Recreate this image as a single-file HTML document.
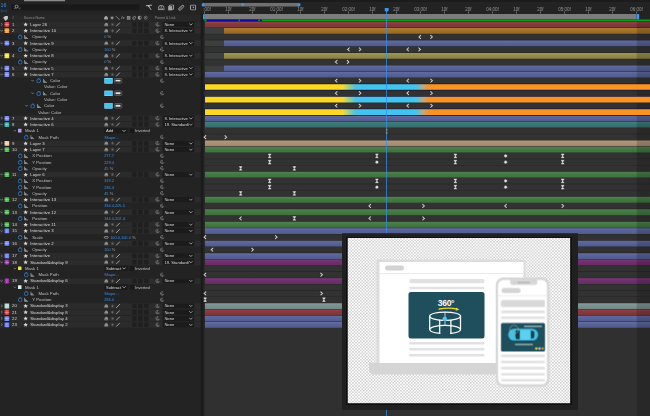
<!DOCTYPE html>
<html><head><meta charset="utf-8"><title>Timeline</title>
<style>
html,body{margin:0;padding:0}
body{width:650px;height:416px;position:relative;overflow:hidden;background:#232323;font-family:"Liberation Sans",sans-serif;font-size:17.2px;line-height:25.03px;color:#b4b4b4}
div,span,svg{position:absolute;box-sizing:border-box}
.t{white-space:nowrap;height:25.03px}
.lr{left:0;width:804px;height:23.2px;background:#2b2b2b}
.sw{left:17.6px;width:19.2px;height:19.2px;background-image:linear-gradient(90deg,transparent 44%,rgba(255,255,255,.28) 44%,rgba(255,255,255,.28) 58%,transparent 58%),linear-gradient(transparent 44%,rgba(255,255,255,.28) 44%,rgba(255,255,255,.28) 58%,transparent 58%)}
.nm{color:#dadada}
.bl{color:#3392f2}
.dd{left:650.4px;width:126.4px;height:20.8px;background:#1b1b1b;border-radius:2.4px}
.cb{width:16.8px;height:18.4px;background:#1f1f1f}
.bar{height:23.2px;background-image:linear-gradient(rgba(255,255,255,.05),rgba(0,0,0,.02) 40%,rgba(0,0,0,.1))}
.trk{left:818.4px;width:1781.6px;height:22.8px;background:#323232}
#w{left:0;top:0;width:2600px;height:1664px;transform:scale(0.25);transform-origin:0 0}
</style></head><body><div id="w">
<div style="left:96px;top:0;width:164px;height:5.2px;background:#8c8c8c"></div><div class="t" style="left:1.6px;top:7.6px;font-size:21.6px;color:#2f8cf0">16</div><div class="t" style="left:1.6px;top:30.4px;font-size:16px;color:#2a5f9a">fps)</div><div style="left:0;top:58px;width:804px;height:26.4px;background:#272727"></div><div style="left:44.8px;top:16px;width:514px;height:26.4px;background:#191919;border:1.6px solid #2c2c2c;border-radius:4px"></div><svg style="left:56px;top:18.4px" width="28" height="20" viewBox="0 0 7 5"><circle cx="2.6" cy="2" r="1.5" fill="none" stroke="#b0b0b0" stroke-width=".8"/><path d="M1.6 3.2L.4 4.6M4.6 3.6l.9.8.9-.8" fill="none" stroke="#b0b0b0" stroke-width=".7"/></svg><svg style="left:582.4px;top:16.8px" width="28" height="25.6" viewBox="0 0 70 64"><path d="M4 14H30L56 56M30 14L50 8" stroke="#c4c4c4" stroke-width="9" fill="none"/><circle cx="32" cy="16" r="9" fill="#c4c4c4"/><circle cx="56" cy="10" r="7" fill="#c4c4c4"/></svg><svg style="left:631.2px;top:18.4px" width="28" height="23.2" viewBox="0 0 70 58"><path d="M6 52V38A29 29 0 0 1 64 38V52Z" stroke="#b4b4b4" stroke-width="8" fill="none"/><path d="M35 12V50M22 50V34M48 50V34" stroke="#b4b4b4" stroke-width="6"/></svg><svg style="left:671.2px;top:17.6px" width="24.8" height="25.6" viewBox="0 0 62 64"><rect x="4" y="16" width="40" height="44" fill="#a4a4a4"/><path d="M18 16V4H58V48H44" stroke="#c0c0c0" stroke-width="8" fill="none"/></svg><svg style="left:709.6px;top:16.8px" width="28" height="27.2" viewBox="0 0 70 68"><rect x="-12" y="-9" width="62" height="22" rx="11" transform="translate(22 46) rotate(-42)" stroke="#b8b8b8" stroke-width="8" fill="none"/><path d="M22 46L48 22" stroke="#b8b8b8" stroke-width="5"/></svg><svg style="left:760px;top:18.4px" width="24.8" height="24" viewBox="0 0 62 60"><rect x="5" y="5" width="52" height="50" rx="10" stroke="#b8b8b8" stroke-width="9" fill="none"/><path d="M22 22H40V40Z" fill="#b8b8b8"/></svg><div class="t" style="left:48.8px;top:59.6px;color:#909090;font-size:14.4px">#</div><div class="t" style="left:95.2px;top:59.6px;color:#909090;font-size:13.6px">Source Name</div><div class="t" style="left:620px;top:59.6px;color:#909090;font-size:13.6px">Parent &amp; Link</div><svg style="left:9.6px;top:61.6px" width="24" height="24" viewBox="0 0 6 6"><path d="M.6 2.2L2.6.4H5.4V3.2L3.2 5.4Z" fill="#c8c8c8"/></svg><svg style="left:415.2px;top:62.4px" width="18.4" height="17.6" viewBox="0 0 46 44"><path d="M23 4C10 4 6 18 2 34h42C40 18 36 4 23 4z" fill="#a8a8a8"/><path d="M4 40h38" stroke="#a8a8a8" stroke-width="5"/></svg><svg style="left:440px;top:63.2px" width="16.8" height="16.8" viewBox="0 0 40 40"><path d="M20 2V38M2 20H38M8 8L32 32M32 8L8 32" stroke="#a0a0a0" stroke-width="5"/><circle cx="20" cy="20" r="8" fill="#a0a0a0"/></svg><svg style="left:460.8px;top:61.6px" width="20" height="20" viewBox="0 0 50 50"><path d="M6 6L44 44" stroke="#a8a8a8" stroke-width="7"/></svg><div class="t" style="left:484.8px;top:58.8px;font-size:17.6px;font-style:italic;color:#a0a0a0">fx</div><svg style="left:506.4px;top:63.2px" width="16.8" height="16.8" viewBox="0 0 42 42"><rect x="3" y="3" width="36" height="36" fill="#9c9c9c"/><path d="M3 15H39M3 27H39M15 3V39M27 3V39" stroke="#555" stroke-width="3"/></svg><svg style="left:528px;top:62.4px" width="17.6" height="18.4" viewBox="0 0 44 46"><ellipse cx="22" cy="23" rx="12" ry="17" transform="rotate(35 22 23)" stroke="#a0a0a0" stroke-width="7" fill="none"/></svg><svg style="left:549.6px;top:62.4px" width="17.6" height="17.6" viewBox="0 0 44 44"><circle cx="22" cy="22" r="17" stroke="#b0b0b0" stroke-width="6" fill="none"/><path d="M22 5A17 17 0 0 0 22 39Z" fill="#b0b0b0"/></svg><svg style="left:573.6px;top:62.4px" width="17.6" height="17.6" viewBox="0 0 44 44"><circle cx="22" cy="22" r="16" stroke="#909090" stroke-width="6" fill="none"/><circle cx="22" cy="22" r="6" fill="#909090"/></svg><div class="lr" style="top:86.4px"></div><svg style="left:0.4px;top:90.8px" width="12.8" height="12.8" viewBox="0 0 26 26"><path d="M8 3L19 13L8 23" stroke="#a8a8a8" stroke-width="4.500" fill="none"/></svg><div style="left:15.2px;top:86.4px;width:23.6px;height:22.8px;background:#17171f"></div><div class="sw" style="top:88.2px;background-color:#e23c3c"></div><div class="t nm" style="left:48px;top:85.2px">1</div><svg style="left:92.8px;top:88px" width="19.2" height="19.2" viewBox="0 0 48 48"><path d="M24 2l6.5 15 16 1.500-12.500 10.500 4.500 16L24 36 9.500 45l4.500-16L1.500 18.500l16-1.500z" fill="#d8d8d8"/></svg><div class="t nm" style="left:121.2px;top:85.2px">Layer 26</div><svg style="left:416px;top:88.8px" width="18.4" height="17.6" viewBox="0 0 46 44"><path d="M23 4C10 4 6 18 2 34h42C40 18 36 4 23 4z" fill="#8e8e8e"/><path d="M4 40h38" stroke="#8e8e8e" stroke-width="5"/></svg><svg style="left:441.6px;top:89.6px" width="16" height="16" viewBox="0 0 40 40"><path d="M20 2V38M2 20H38M8 8L32 32M32 8L8 32" stroke="#6c6c6c" stroke-width="4"/><circle cx="20" cy="20" r="7" fill="#6c6c6c"/></svg><svg style="left:462.4px;top:88px" width="20" height="20" viewBox="0 0 50 50"><path d="M6 44L44 6" stroke="#d0d0d0" stroke-width="7"/></svg><div class="cb" style="left:528.8px;top:88.6px"></div><div class="cb" style="left:552.8px;top:88.6px"></div><div class="cb" style="left:576.8px;top:88.6px"></div><svg style="left:620px;top:87.6px" width="21.6" height="20" viewBox="0 0 54 50"><path d="M34 8A18 18 0 1 0 44 30M30 18a8 8 0 1 0 6 10" stroke="#909090" stroke-width="6" fill="none"/></svg><div class="dd" style="top:87.4px"></div><div class="t nm" style="left:657.6px;top:85.2px;width:97.6px;overflow:hidden;font-size:16.4px">None</div><svg style="left:755.2px;top:91.2px" width="16.8" height="12.8" viewBox="0 0 42 32"><path d="M5 7L21 24L37 7" stroke="#c4c4c4" stroke-width="7" fill="none"/></svg><div class="lr" style="top:111.44px"></div><svg style="left:0.4px;top:115.84px" width="12.8" height="12.8" viewBox="0 0 26 26"><path d="M3 8L13 19L23 8" stroke="#a8a8a8" stroke-width="4.500" fill="none"/></svg><div style="left:15.2px;top:111.44px;width:23.6px;height:22.8px;background:#17171f"></div><div class="sw" style="top:113.24px;background-color:#f8981c"></div><div class="t nm" style="left:48px;top:110.24px">2</div><svg style="left:92.8px;top:113.04px" width="19.2" height="19.2" viewBox="0 0 48 48"><path d="M24 2l6.5 15 16 1.500-12.500 10.500 4.500 16L24 36 9.500 45l4.500-16L1.500 18.500l16-1.500z" fill="#d8d8d8"/></svg><div class="t nm" style="left:121.2px;top:110.24px">Interactive 10</div><svg style="left:416px;top:113.84px" width="18.4" height="17.6" viewBox="0 0 46 44"><path d="M23 4C10 4 6 18 2 34h42C40 18 36 4 23 4z" fill="#8e8e8e"/><path d="M4 40h38" stroke="#8e8e8e" stroke-width="5"/></svg><svg style="left:441.6px;top:114.64px" width="16" height="16" viewBox="0 0 40 40"><path d="M20 2V38M2 20H38M8 8L32 32M32 8L8 32" stroke="#6c6c6c" stroke-width="4"/><circle cx="20" cy="20" r="7" fill="#6c6c6c"/></svg><svg style="left:462.4px;top:113.04px" width="20" height="20" viewBox="0 0 50 50"><path d="M6 44L44 6" stroke="#d0d0d0" stroke-width="7"/></svg><div class="cb" style="left:528.8px;top:113.64px"></div><div class="cb" style="left:552.8px;top:113.64px"></div><div class="cb" style="left:576.8px;top:113.64px"></div><svg style="left:620px;top:112.64px" width="21.6" height="20" viewBox="0 0 54 50"><path d="M34 8A18 18 0 1 0 44 30M30 18a8 8 0 1 0 6 10" stroke="#909090" stroke-width="6" fill="none"/></svg><div class="dd" style="top:112.44px"></div><div class="t nm" style="left:657.6px;top:110.24px;width:97.6px;overflow:hidden;font-size:16.4px">8. Interactive</div><svg style="left:755.2px;top:116.24px" width="16.8" height="12.8" viewBox="0 0 42 32"><path d="M5 7L21 24L37 7" stroke="#c4c4c4" stroke-width="7" fill="none"/></svg><svg style="left:69.6px;top:137.24px" width="21.6" height="21.6" viewBox="0 0 54 54"><circle cx="27" cy="30" r="19" fill="none" stroke="#2f7fd0" stroke-width="8"/><path d="M18 6h18M38 12l6-6" stroke="#2f7fd0" stroke-width="7" fill="none"/></svg><svg style="left:96px;top:139.24px" width="17.6" height="17.6" viewBox="0 0 44 44"><path d="M6 2V38H42M16 38V20l12 12" stroke="#b8b8b8" stroke-width="7" fill="none"/></svg><div class="t" style="left:128.8px;top:135.24px;color:#c0c0c0">Opacity</div><div class="t" style="left:416.8px;top:135.24px;font-size:15.6px"><span class="bl" style="position:static">0</span><span style="position:static;color:#a0a0a0;font-size:16px"> %</span></div><svg style="left:638.4px;top:137.64px" width="21.6" height="20" viewBox="0 0 54 50"><path d="M34 8A18 18 0 1 0 44 30M30 18a8 8 0 1 0 6 10" stroke="#909090" stroke-width="6" fill="none"/></svg><div class="lr" style="top:161.48px"></div><svg style="left:0.4px;top:165.88px" width="12.8" height="12.8" viewBox="0 0 26 26"><path d="M3 8L13 19L23 8" stroke="#a8a8a8" stroke-width="4.500" fill="none"/></svg><div style="left:15.2px;top:161.48px;width:23.6px;height:22.8px;background:#17171f"></div><div class="sw" style="top:163.28px;background-color:#7484f4"></div><div class="t nm" style="left:48px;top:160.28px">3</div><svg style="left:92.8px;top:163.08px" width="19.2" height="19.2" viewBox="0 0 48 48"><path d="M24 2l6.5 15 16 1.500-12.500 10.500 4.500 16L24 36 9.500 45l4.500-16L1.500 18.500l16-1.500z" fill="#d8d8d8"/></svg><div class="t nm" style="left:121.2px;top:160.28px">Interactive 9</div><svg style="left:416px;top:163.88px" width="18.4" height="17.6" viewBox="0 0 46 44"><path d="M23 4C10 4 6 18 2 34h42C40 18 36 4 23 4z" fill="#8e8e8e"/><path d="M4 40h38" stroke="#8e8e8e" stroke-width="5"/></svg><svg style="left:441.6px;top:164.68px" width="16" height="16" viewBox="0 0 40 40"><path d="M20 2V38M2 20H38M8 8L32 32M32 8L8 32" stroke="#6c6c6c" stroke-width="4"/><circle cx="20" cy="20" r="7" fill="#6c6c6c"/></svg><svg style="left:462.4px;top:163.08px" width="20" height="20" viewBox="0 0 50 50"><path d="M6 44L44 6" stroke="#d0d0d0" stroke-width="7"/></svg><div class="cb" style="left:528.8px;top:163.68px"></div><div class="cb" style="left:552.8px;top:163.68px"></div><div class="cb" style="left:576.8px;top:163.68px"></div><svg style="left:620px;top:162.68px" width="21.6" height="20" viewBox="0 0 54 50"><path d="M34 8A18 18 0 1 0 44 30M30 18a8 8 0 1 0 6 10" stroke="#909090" stroke-width="6" fill="none"/></svg><div class="dd" style="top:162.48px"></div><div class="t nm" style="left:657.6px;top:160.28px;width:97.6px;overflow:hidden;font-size:16.4px">8. Interactive</div><svg style="left:755.2px;top:166.28px" width="16.8" height="12.8" viewBox="0 0 42 32"><path d="M5 7L21 24L37 7" stroke="#c4c4c4" stroke-width="7" fill="none"/></svg><svg style="left:69.6px;top:187.32px" width="21.6" height="21.6" viewBox="0 0 54 54"><circle cx="27" cy="30" r="19" fill="none" stroke="#2f7fd0" stroke-width="8"/><path d="M18 6h18M38 12l6-6" stroke="#2f7fd0" stroke-width="7" fill="none"/></svg><svg style="left:96px;top:189.32px" width="17.6" height="17.6" viewBox="0 0 44 44"><path d="M6 2V38H42M16 38V20l12 12" stroke="#b8b8b8" stroke-width="7" fill="none"/></svg><div class="t" style="left:128.8px;top:185.32px;color:#c0c0c0">Opacity</div><div class="t" style="left:416.8px;top:185.32px;font-size:15.6px"><span class="bl" style="position:static">100</span><span style="position:static;color:#a0a0a0;font-size:16px"> %</span></div><svg style="left:638.4px;top:187.72px" width="21.6" height="20" viewBox="0 0 54 50"><path d="M34 8A18 18 0 1 0 44 30M30 18a8 8 0 1 0 6 10" stroke="#909090" stroke-width="6" fill="none"/></svg><div class="lr" style="top:211.52px"></div><svg style="left:0.4px;top:215.92px" width="12.8" height="12.8" viewBox="0 0 26 26"><path d="M3 8L13 19L23 8" stroke="#a8a8a8" stroke-width="4.500" fill="none"/></svg><div style="left:15.2px;top:211.52px;width:23.6px;height:22.8px;background:#17171f"></div><div class="sw" style="top:213.32px;background-color:#f4e244"></div><div class="t nm" style="left:48px;top:210.32px">4</div><svg style="left:92.8px;top:213.12px" width="19.2" height="19.2" viewBox="0 0 48 48"><path d="M24 2l6.5 15 16 1.500-12.500 10.500 4.500 16L24 36 9.500 45l4.500-16L1.500 18.500l16-1.500z" fill="#d8d8d8"/></svg><div class="t nm" style="left:121.2px;top:210.32px">Interactive 8</div><svg style="left:416px;top:213.92px" width="18.4" height="17.6" viewBox="0 0 46 44"><path d="M23 4C10 4 6 18 2 34h42C40 18 36 4 23 4z" fill="#8e8e8e"/><path d="M4 40h38" stroke="#8e8e8e" stroke-width="5"/></svg><svg style="left:441.6px;top:214.72px" width="16" height="16" viewBox="0 0 40 40"><path d="M20 2V38M2 20H38M8 8L32 32M32 8L8 32" stroke="#6c6c6c" stroke-width="4"/><circle cx="20" cy="20" r="7" fill="#6c6c6c"/></svg><svg style="left:462.4px;top:213.12px" width="20" height="20" viewBox="0 0 50 50"><path d="M6 44L44 6" stroke="#d0d0d0" stroke-width="7"/></svg><div class="cb" style="left:528.8px;top:213.72px"></div><div class="cb" style="left:552.8px;top:213.72px"></div><div class="cb" style="left:576.8px;top:213.72px"></div><svg style="left:620px;top:212.72px" width="21.6" height="20" viewBox="0 0 54 50"><path d="M34 8A18 18 0 1 0 44 30M30 18a8 8 0 1 0 6 10" stroke="#909090" stroke-width="6" fill="none"/></svg><div class="dd" style="top:212.52px"></div><div class="t nm" style="left:657.6px;top:210.32px;width:97.6px;overflow:hidden;font-size:16.4px">8. Interactive</div><svg style="left:755.2px;top:216.32px" width="16.8" height="12.8" viewBox="0 0 42 32"><path d="M5 7L21 24L37 7" stroke="#c4c4c4" stroke-width="7" fill="none"/></svg><svg style="left:69.6px;top:237.36px" width="21.6" height="21.6" viewBox="0 0 54 54"><circle cx="27" cy="30" r="19" fill="none" stroke="#2f7fd0" stroke-width="8"/><path d="M18 6h18M38 12l6-6" stroke="#2f7fd0" stroke-width="7" fill="none"/></svg><svg style="left:96px;top:239.36px" width="17.6" height="17.6" viewBox="0 0 44 44"><path d="M6 2V38H42M16 38V20l12 12" stroke="#b8b8b8" stroke-width="7" fill="none"/></svg><div class="t" style="left:128.8px;top:235.36px;color:#c0c0c0">Opacity</div><div class="t" style="left:416.8px;top:235.36px;font-size:15.6px"><span class="bl" style="position:static">0</span><span style="position:static;color:#a0a0a0;font-size:16px"> %</span></div><svg style="left:638.4px;top:237.76px" width="21.6" height="20" viewBox="0 0 54 50"><path d="M34 8A18 18 0 1 0 44 30M30 18a8 8 0 1 0 6 10" stroke="#909090" stroke-width="6" fill="none"/></svg><div class="lr" style="top:261.6px"></div><svg style="left:0.4px;top:266px" width="12.8" height="12.8" viewBox="0 0 26 26"><path d="M8 3L19 13L8 23" stroke="#a8a8a8" stroke-width="4.500" fill="none"/></svg><div style="left:15.2px;top:261.6px;width:23.6px;height:22.8px;background:#17171f"></div><div class="sw" style="top:263.4px;background-color:#7484f4"></div><div class="t nm" style="left:48px;top:260.4px">5</div><svg style="left:92.8px;top:263.2px" width="19.2" height="19.2" viewBox="0 0 48 48"><path d="M24 2l6.5 15 16 1.500-12.500 10.500 4.500 16L24 36 9.500 45l4.500-16L1.500 18.500l16-1.500z" fill="#d8d8d8"/></svg><div class="t nm" style="left:121.2px;top:260.4px">Interactive 5</div><svg style="left:416px;top:264px" width="18.4" height="17.6" viewBox="0 0 46 44"><path d="M23 4C10 4 6 18 2 34h42C40 18 36 4 23 4z" fill="#8e8e8e"/><path d="M4 40h38" stroke="#8e8e8e" stroke-width="5"/></svg><svg style="left:441.6px;top:264.8px" width="16" height="16" viewBox="0 0 40 40"><path d="M20 2V38M2 20H38M8 8L32 32M32 8L8 32" stroke="#6c6c6c" stroke-width="4"/><circle cx="20" cy="20" r="7" fill="#6c6c6c"/></svg><svg style="left:462.4px;top:263.2px" width="20" height="20" viewBox="0 0 50 50"><path d="M6 44L44 6" stroke="#d0d0d0" stroke-width="7"/></svg><div class="cb" style="left:528.8px;top:263.8px"></div><div class="cb" style="left:552.8px;top:263.8px"></div><div class="cb" style="left:576.8px;top:263.8px"></div><svg style="left:620px;top:262.8px" width="21.6" height="20" viewBox="0 0 54 50"><path d="M34 8A18 18 0 1 0 44 30M30 18a8 8 0 1 0 6 10" stroke="#909090" stroke-width="6" fill="none"/></svg><div class="dd" style="top:262.6px"></div><div class="t nm" style="left:657.6px;top:260.4px;width:97.6px;overflow:hidden;font-size:16.4px">8. Interactive</div><svg style="left:755.2px;top:266.4px" width="16.8" height="12.8" viewBox="0 0 42 32"><path d="M5 7L21 24L37 7" stroke="#c4c4c4" stroke-width="7" fill="none"/></svg><div class="lr" style="top:286.64px"></div><svg style="left:0.4px;top:291.04px" width="12.8" height="12.8" viewBox="0 0 26 26"><path d="M3 8L13 19L23 8" stroke="#a8a8a8" stroke-width="4.500" fill="none"/></svg><div style="left:15.2px;top:286.64px;width:23.6px;height:22.8px;background:#17171f"></div><div class="sw" style="top:288.44px;background-color:#7484f4"></div><div class="t nm" style="left:48px;top:285.44px">6</div><svg style="left:92.8px;top:288.24px" width="19.2" height="19.2" viewBox="0 0 48 48"><path d="M24 2l6.5 15 16 1.500-12.500 10.500 4.500 16L24 36 9.500 45l4.500-16L1.500 18.500l16-1.500z" fill="#d8d8d8"/></svg><div class="t nm" style="left:121.2px;top:285.44px">Interactive 7</div><svg style="left:416px;top:289.04px" width="18.4" height="17.6" viewBox="0 0 46 44"><path d="M23 4C10 4 6 18 2 34h42C40 18 36 4 23 4z" fill="#8e8e8e"/><path d="M4 40h38" stroke="#8e8e8e" stroke-width="5"/></svg><svg style="left:441.6px;top:289.84px" width="16" height="16" viewBox="0 0 40 40"><path d="M20 2V38M2 20H38M8 8L32 32M32 8L8 32" stroke="#6c6c6c" stroke-width="4"/><circle cx="20" cy="20" r="7" fill="#6c6c6c"/></svg><svg style="left:462.4px;top:288.24px" width="20" height="20" viewBox="0 0 50 50"><path d="M6 44L44 6" stroke="#d0d0d0" stroke-width="7"/></svg><div class="cb" style="left:528.8px;top:288.84px"></div><div class="cb" style="left:552.8px;top:288.84px"></div><div class="cb" style="left:576.8px;top:288.84px"></div><svg style="left:620px;top:287.84px" width="21.6" height="20" viewBox="0 0 54 50"><path d="M34 8A18 18 0 1 0 44 30M30 18a8 8 0 1 0 6 10" stroke="#909090" stroke-width="6" fill="none"/></svg><div class="dd" style="top:287.64px"></div><div class="t nm" style="left:657.6px;top:285.44px;width:97.6px;overflow:hidden;font-size:16.4px">8. Interactive</div><svg style="left:755.2px;top:291.44px" width="16.8" height="12.8" viewBox="0 0 42 32"><path d="M5 7L21 24L37 7" stroke="#c4c4c4" stroke-width="7" fill="none"/></svg><svg style="left:124.4px;top:316.04px" width="12.8" height="12.8" viewBox="0 0 26 26"><path d="M3 8L13 19L23 8" stroke="#a8a8a8" stroke-width="4.500" fill="none"/></svg><svg style="left:144px;top:312.44px" width="21.6" height="21.6" viewBox="0 0 54 54"><circle cx="27" cy="30" r="19" fill="none" stroke="#2f7fd0" stroke-width="8"/><path d="M18 6h18M38 12l6-6" stroke="#2f7fd0" stroke-width="7" fill="none"/></svg><svg style="left:171.2px;top:314.44px" width="17.6" height="17.6" viewBox="0 0 44 44"><path d="M6 2V38H42M16 38V20l12 12" stroke="#b8b8b8" stroke-width="7" fill="none"/></svg><div class="t" style="left:200px;top:310.44px;color:#c0c0c0">Color</div><div style="left:417.6px;top:312.44px;width:32.8px;height:21.2px;background:#42c4f2;border:2px solid #9adcf4"></div><div style="left:456.8px;top:313.24px;width:31.2px;height:19.6px;background:#1a1a1a;border:2.4px solid #8c8c8c;border-radius:4px"></div><div style="left:462.4px;top:319.24px;width:20px;height:7.2px;background:#e0e0e0"></div><svg style="left:638.4px;top:312.84px" width="21.6" height="20" viewBox="0 0 54 50"><path d="M34 8A18 18 0 1 0 44 30M30 18a8 8 0 1 0 6 10" stroke="#909090" stroke-width="6" fill="none"/></svg><div class="t" style="left:176px;top:335.48px;color:#c0c0c0">Value: Color</div><svg style="left:124.4px;top:366.12px" width="12.8" height="12.8" viewBox="0 0 26 26"><path d="M3 8L13 19L23 8" stroke="#a8a8a8" stroke-width="4.500" fill="none"/></svg><svg style="left:144px;top:362.52px" width="21.6" height="21.6" viewBox="0 0 54 54"><circle cx="27" cy="30" r="19" fill="none" stroke="#2f7fd0" stroke-width="8"/><path d="M18 6h18M38 12l6-6" stroke="#2f7fd0" stroke-width="7" fill="none"/></svg><svg style="left:171.2px;top:364.52px" width="17.6" height="17.6" viewBox="0 0 44 44"><path d="M6 2V38H42M16 38V20l12 12" stroke="#b8b8b8" stroke-width="7" fill="none"/></svg><div class="t" style="left:200px;top:360.52px;color:#c0c0c0">Color</div><div style="left:417.6px;top:362.52px;width:32.8px;height:21.2px;background:#42c4f2;border:2px solid #9adcf4"></div><div style="left:456.8px;top:363.32px;width:31.2px;height:19.6px;background:#1a1a1a;border:2.4px solid #8c8c8c;border-radius:4px"></div><div style="left:462.4px;top:369.32px;width:20px;height:7.2px;background:#e0e0e0"></div><svg style="left:638.4px;top:362.92px" width="21.6" height="20" viewBox="0 0 54 50"><path d="M34 8A18 18 0 1 0 44 30M30 18a8 8 0 1 0 6 10" stroke="#909090" stroke-width="6" fill="none"/></svg><div class="t" style="left:176px;top:385.52px;color:#c0c0c0">Value: Color</div><svg style="left:100.4px;top:416.16px" width="12.8" height="12.8" viewBox="0 0 26 26"><path d="M3 8L13 19L23 8" stroke="#a8a8a8" stroke-width="4.500" fill="none"/></svg><svg style="left:120px;top:412.56px" width="21.6" height="21.6" viewBox="0 0 54 54"><circle cx="27" cy="30" r="19" fill="none" stroke="#2f7fd0" stroke-width="8"/><path d="M18 6h18M38 12l6-6" stroke="#2f7fd0" stroke-width="7" fill="none"/></svg><svg style="left:147.2px;top:414.56px" width="17.6" height="17.6" viewBox="0 0 44 44"><path d="M6 2V38H42M16 38V20l12 12" stroke="#b8b8b8" stroke-width="7" fill="none"/></svg><div class="t" style="left:176px;top:410.56px;color:#c0c0c0">Color</div><div style="left:417.6px;top:412.56px;width:32.8px;height:21.2px;background:#42c4f2;border:2px solid #9adcf4"></div><div style="left:456.8px;top:413.36px;width:31.2px;height:19.6px;background:#1a1a1a;border:2.4px solid #8c8c8c;border-radius:4px"></div><div style="left:462.4px;top:419.36px;width:20px;height:7.2px;background:#e0e0e0"></div><svg style="left:638.4px;top:412.96px" width="21.6" height="20" viewBox="0 0 54 50"><path d="M34 8A18 18 0 1 0 44 30M30 18a8 8 0 1 0 6 10" stroke="#909090" stroke-width="6" fill="none"/></svg><div class="t" style="left:152px;top:435.6px;color:#c0c0c0">Value: Color</div><div class="lr" style="top:461.8px"></div><svg style="left:0.4px;top:466.2px" width="12.8" height="12.8" viewBox="0 0 26 26"><path d="M8 3L19 13L8 23" stroke="#a8a8a8" stroke-width="4.500" fill="none"/></svg><div style="left:15.2px;top:461.8px;width:23.6px;height:22.8px;background:#17171f"></div><div class="sw" style="top:463.6px;background-color:#7484f4"></div><div class="t nm" style="left:48px;top:460.6px">7</div><svg style="left:92.8px;top:463.4px" width="19.2" height="19.2" viewBox="0 0 48 48"><path d="M24 2l6.5 15 16 1.500-12.500 10.500 4.500 16L24 36 9.500 45l4.500-16L1.500 18.500l16-1.500z" fill="#d8d8d8"/></svg><div class="t nm" style="left:121.2px;top:460.6px">Interactive 4</div><svg style="left:416px;top:464.2px" width="18.4" height="17.6" viewBox="0 0 46 44"><path d="M23 4C10 4 6 18 2 34h42C40 18 36 4 23 4z" fill="#8e8e8e"/><path d="M4 40h38" stroke="#8e8e8e" stroke-width="5"/></svg><svg style="left:441.6px;top:465px" width="16" height="16" viewBox="0 0 40 40"><path d="M20 2V38M2 20H38M8 8L32 32M32 8L8 32" stroke="#6c6c6c" stroke-width="4"/><circle cx="20" cy="20" r="7" fill="#6c6c6c"/></svg><svg style="left:462.4px;top:463.4px" width="20" height="20" viewBox="0 0 50 50"><path d="M6 44L44 6" stroke="#d0d0d0" stroke-width="7"/></svg><div class="cb" style="left:528.8px;top:464px"></div><div class="cb" style="left:552.8px;top:464px"></div><div class="cb" style="left:576.8px;top:464px"></div><svg style="left:620px;top:463px" width="21.6" height="20" viewBox="0 0 54 50"><path d="M34 8A18 18 0 1 0 44 30M30 18a8 8 0 1 0 6 10" stroke="#909090" stroke-width="6" fill="none"/></svg><div class="dd" style="top:462.8px"></div><div class="t nm" style="left:657.6px;top:460.6px;width:97.6px;overflow:hidden;font-size:16.4px">8. Interactive</div><svg style="left:755.2px;top:466.6px" width="16.8" height="12.8" viewBox="0 0 42 32"><path d="M5 7L21 24L37 7" stroke="#c4c4c4" stroke-width="7" fill="none"/></svg><div class="lr" style="top:486.84px"></div><svg style="left:0.4px;top:491.24px" width="12.8" height="12.8" viewBox="0 0 26 26"><path d="M3 8L13 19L23 8" stroke="#a8a8a8" stroke-width="4.500" fill="none"/></svg><div style="left:15.2px;top:486.84px;width:23.6px;height:22.8px;background:#17171f"></div><div class="sw" style="top:488.64px;background-color:#2cb4ac"></div><div class="t nm" style="left:48px;top:485.64px">8</div><svg style="left:92.8px;top:488.44px" width="19.2" height="19.2" viewBox="0 0 48 48"><path d="M24 2l6.5 15 16 1.500-12.500 10.500 4.500 16L24 36 9.500 45l4.500-16L1.500 18.500l16-1.500z" fill="#d8d8d8"/></svg><div class="t nm" style="left:121.2px;top:485.64px">Interactive 6</div><svg style="left:416px;top:489.24px" width="18.4" height="17.6" viewBox="0 0 46 44"><path d="M23 4C10 4 6 18 2 34h42C40 18 36 4 23 4z" fill="#8e8e8e"/><path d="M4 40h38" stroke="#8e8e8e" stroke-width="5"/></svg><svg style="left:441.6px;top:490.04px" width="16" height="16" viewBox="0 0 40 40"><path d="M20 2V38M2 20H38M8 8L32 32M32 8L8 32" stroke="#6c6c6c" stroke-width="4"/><circle cx="20" cy="20" r="7" fill="#6c6c6c"/></svg><svg style="left:462.4px;top:488.44px" width="20" height="20" viewBox="0 0 50 50"><path d="M6 44L44 6" stroke="#d0d0d0" stroke-width="7"/></svg><div class="cb" style="left:528.8px;top:489.04px"></div><div class="cb" style="left:552.8px;top:489.04px"></div><div class="cb" style="left:576.8px;top:489.04px"></div><svg style="left:620px;top:488.04px" width="21.6" height="20" viewBox="0 0 54 50"><path d="M34 8A18 18 0 1 0 44 30M30 18a8 8 0 1 0 6 10" stroke="#909090" stroke-width="6" fill="none"/></svg><div class="dd" style="top:487.84px"></div><div class="t nm" style="left:657.6px;top:485.64px;width:97.6px;overflow:hidden;font-size:16.4px">19. Standard&amp;d</div><svg style="left:755.2px;top:491.64px" width="16.8" height="12.8" viewBox="0 0 42 32"><path d="M5 7L21 24L37 7" stroke="#c4c4c4" stroke-width="7" fill="none"/></svg><svg style="left:53.2px;top:516.28px" width="12.8" height="12.8" viewBox="0 0 26 26"><path d="M3 8L13 19L23 8" stroke="#a8a8a8" stroke-width="4.500" fill="none"/></svg><div style="left:72px;top:515.48px;width:14.4px;height:14.4px;background:#b4a4f4"></div><div class="t" style="left:100px;top:510.68px;color:#c0c0c0">Mask 1</div><div style="left:417.6px;top:512.68px;width:92px;height:21.2px;background:#1b1b1b;border-radius:2.4px"></div><div class="t nm" style="left:424px;top:510.68px;font-size:16.4px">Add</div><svg style="left:488px;top:516.68px" width="16.8" height="12.8" viewBox="0 0 42 32"><path d="M5 7L21 24L37 7" stroke="#c4c4c4" stroke-width="7" fill="none"/></svg><div class="cb" style="left:519.2px;top:514.08px;background:#191919"></div><div class="t" style="left:540px;top:510.68px;font-size:16.4px;color:#c0c0c0">Inverted</div><svg style="left:94.4px;top:537.72px" width="21.6" height="21.6" viewBox="0 0 54 54"><circle cx="27" cy="30" r="19" fill="none" stroke="#2f7fd0" stroke-width="8"/><path d="M18 6h18M38 12l6-6" stroke="#2f7fd0" stroke-width="7" fill="none"/></svg><svg style="left:120.8px;top:539.72px" width="17.6" height="17.6" viewBox="0 0 44 44"><path d="M6 2V38H42M16 38V20l12 12" stroke="#b8b8b8" stroke-width="7" fill="none"/></svg><div class="t" style="left:153.6px;top:535.72px;color:#c0c0c0">Mask Path</div><div class="t" style="left:416.8px;top:535.72px;font-size:15.6px"><span class="bl" style="position:static">Shape...</span><span style="position:static;color:#a0a0a0;font-size:16px"> </span></div><svg style="left:638.4px;top:538.12px" width="21.6" height="20" viewBox="0 0 54 50"><path d="M34 8A18 18 0 1 0 44 30M30 18a8 8 0 1 0 6 10" stroke="#909090" stroke-width="6" fill="none"/></svg><div class="lr" style="top:561.92px"></div><svg style="left:0.4px;top:566.32px" width="12.8" height="12.8" viewBox="0 0 26 26"><path d="M8 3L19 13L8 23" stroke="#a8a8a8" stroke-width="4.500" fill="none"/></svg><div style="left:15.2px;top:561.92px;width:23.6px;height:22.8px;background:#17171f"></div><div class="sw" style="top:563.72px;background-color:#f0c8a4"></div><div class="t nm" style="left:48px;top:560.72px">9</div><svg style="left:92.8px;top:563.52px" width="19.2" height="19.2" viewBox="0 0 48 48"><path d="M24 2l6.5 15 16 1.500-12.500 10.500 4.500 16L24 36 9.500 45l4.500-16L1.500 18.500l16-1.500z" fill="#d8d8d8"/></svg><div class="t nm" style="left:121.2px;top:560.72px">Layer 3</div><svg style="left:416px;top:564.32px" width="18.4" height="17.6" viewBox="0 0 46 44"><path d="M23 4C10 4 6 18 2 34h42C40 18 36 4 23 4z" fill="#8e8e8e"/><path d="M4 40h38" stroke="#8e8e8e" stroke-width="5"/></svg><svg style="left:441.6px;top:565.12px" width="16" height="16" viewBox="0 0 40 40"><path d="M20 2V38M2 20H38M8 8L32 32M32 8L8 32" stroke="#6c6c6c" stroke-width="4"/><circle cx="20" cy="20" r="7" fill="#6c6c6c"/></svg><svg style="left:462.4px;top:563.52px" width="20" height="20" viewBox="0 0 50 50"><path d="M6 44L44 6" stroke="#d0d0d0" stroke-width="7"/></svg><div class="cb" style="left:528.8px;top:564.12px"></div><div class="cb" style="left:552.8px;top:564.12px"></div><div class="cb" style="left:576.8px;top:564.12px"></div><svg style="left:620px;top:563.12px" width="21.6" height="20" viewBox="0 0 54 50"><path d="M34 8A18 18 0 1 0 44 30M30 18a8 8 0 1 0 6 10" stroke="#909090" stroke-width="6" fill="none"/></svg><div class="dd" style="top:562.92px"></div><div class="t nm" style="left:657.6px;top:560.72px;width:97.6px;overflow:hidden;font-size:16.4px">None</div><svg style="left:755.2px;top:566.72px" width="16.8" height="12.8" viewBox="0 0 42 32"><path d="M5 7L21 24L37 7" stroke="#c4c4c4" stroke-width="7" fill="none"/></svg><div class="lr" style="top:586.96px"></div><svg style="left:0.4px;top:591.36px" width="12.8" height="12.8" viewBox="0 0 26 26"><path d="M3 8L13 19L23 8" stroke="#a8a8a8" stroke-width="4.500" fill="none"/></svg><div style="left:15.2px;top:586.96px;width:23.6px;height:22.8px;background:#17171f"></div><div class="sw" style="top:588.76px;background-color:#44b84c"></div><div class="t nm" style="left:48px;top:585.76px">10</div><svg style="left:92.8px;top:588.56px" width="19.2" height="19.2" viewBox="0 0 48 48"><path d="M24 2l6.5 15 16 1.500-12.500 10.500 4.500 16L24 36 9.500 45l4.500-16L1.500 18.500l16-1.500z" fill="#d8d8d8"/></svg><div class="t nm" style="left:121.2px;top:585.76px">Layer 7</div><svg style="left:416px;top:589.36px" width="18.4" height="17.6" viewBox="0 0 46 44"><path d="M23 4C10 4 6 18 2 34h42C40 18 36 4 23 4z" fill="#8e8e8e"/><path d="M4 40h38" stroke="#8e8e8e" stroke-width="5"/></svg><svg style="left:441.6px;top:590.16px" width="16" height="16" viewBox="0 0 40 40"><path d="M20 2V38M2 20H38M8 8L32 32M32 8L8 32" stroke="#6c6c6c" stroke-width="4"/><circle cx="20" cy="20" r="7" fill="#6c6c6c"/></svg><svg style="left:462.4px;top:588.56px" width="20" height="20" viewBox="0 0 50 50"><path d="M6 44L44 6" stroke="#d0d0d0" stroke-width="7"/></svg><div class="cb" style="left:528.8px;top:589.16px"></div><div class="cb" style="left:552.8px;top:589.16px"></div><div class="cb" style="left:576.8px;top:589.16px"></div><svg style="left:620px;top:588.16px" width="21.6" height="20" viewBox="0 0 54 50"><path d="M34 8A18 18 0 1 0 44 30M30 18a8 8 0 1 0 6 10" stroke="#909090" stroke-width="6" fill="none"/></svg><div class="dd" style="top:587.96px"></div><div class="t nm" style="left:657.6px;top:585.76px;width:97.6px;overflow:hidden;font-size:16.4px">None</div><svg style="left:755.2px;top:591.76px" width="16.8" height="12.8" viewBox="0 0 42 32"><path d="M5 7L21 24L37 7" stroke="#c4c4c4" stroke-width="7" fill="none"/></svg><svg style="left:69.6px;top:612.8px" width="21.6" height="21.6" viewBox="0 0 54 54"><circle cx="27" cy="30" r="19" fill="none" stroke="#2f7fd0" stroke-width="8"/><path d="M18 6h18M38 12l6-6" stroke="#2f7fd0" stroke-width="7" fill="none"/></svg><svg style="left:96px;top:614.8px" width="17.6" height="17.6" viewBox="0 0 44 44"><path d="M6 2V38H42M16 38V20l12 12" stroke="#b8b8b8" stroke-width="7" fill="none"/></svg><div class="t" style="left:128.8px;top:610.8px;color:#c0c0c0">X Position</div><div class="t" style="left:416.8px;top:610.8px;font-size:15.6px"><span class="bl" style="position:static">277.7</span><span style="position:static;color:#a0a0a0;font-size:16px"> </span></div><svg style="left:638.4px;top:613.2px" width="21.6" height="20" viewBox="0 0 54 50"><path d="M34 8A18 18 0 1 0 44 30M30 18a8 8 0 1 0 6 10" stroke="#909090" stroke-width="6" fill="none"/></svg><svg style="left:69.6px;top:637.8px" width="21.6" height="21.6" viewBox="0 0 54 54"><circle cx="27" cy="30" r="19" fill="none" stroke="#2f7fd0" stroke-width="8"/><path d="M18 6h18M38 12l6-6" stroke="#2f7fd0" stroke-width="7" fill="none"/></svg><svg style="left:96px;top:639.8px" width="17.6" height="17.6" viewBox="0 0 44 44"><path d="M6 2V38H42M16 38V20l12 12" stroke="#b8b8b8" stroke-width="7" fill="none"/></svg><div class="t" style="left:128.8px;top:635.8px;color:#c0c0c0">Y Position</div><div class="t" style="left:416.8px;top:635.8px;font-size:15.6px"><span class="bl" style="position:static">229.4</span><span style="position:static;color:#a0a0a0;font-size:16px"> </span></div><svg style="left:638.4px;top:638.2px" width="21.6" height="20" viewBox="0 0 54 50"><path d="M34 8A18 18 0 1 0 44 30M30 18a8 8 0 1 0 6 10" stroke="#909090" stroke-width="6" fill="none"/></svg><svg style="left:69.6px;top:662.84px" width="21.6" height="21.6" viewBox="0 0 54 54"><circle cx="27" cy="30" r="19" fill="none" stroke="#2f7fd0" stroke-width="8"/><path d="M18 6h18M38 12l6-6" stroke="#2f7fd0" stroke-width="7" fill="none"/></svg><svg style="left:96px;top:664.84px" width="17.6" height="17.6" viewBox="0 0 44 44"><path d="M6 2V38H42M16 38V20l12 12" stroke="#b8b8b8" stroke-width="7" fill="none"/></svg><div class="t" style="left:128.8px;top:660.84px;color:#c0c0c0">Opacity</div><div class="t" style="left:416.8px;top:660.84px;font-size:15.6px"><span class="bl" style="position:static">45</span><span style="position:static;color:#a0a0a0;font-size:16px"> %</span></div><svg style="left:638.4px;top:663.24px" width="21.6" height="20" viewBox="0 0 54 50"><path d="M34 8A18 18 0 1 0 44 30M30 18a8 8 0 1 0 6 10" stroke="#909090" stroke-width="6" fill="none"/></svg><div class="lr" style="top:687.08px"></div><svg style="left:0.4px;top:691.48px" width="12.8" height="12.8" viewBox="0 0 26 26"><path d="M3 8L13 19L23 8" stroke="#a8a8a8" stroke-width="4.500" fill="none"/></svg><div style="left:15.2px;top:687.08px;width:23.6px;height:22.8px;background:#17171f"></div><div class="sw" style="top:688.88px;background-color:#44b84c"></div><div class="t nm" style="left:48px;top:685.88px">11</div><svg style="left:92.8px;top:688.68px" width="19.2" height="19.2" viewBox="0 0 48 48"><path d="M24 2l6.5 15 16 1.500-12.500 10.500 4.500 16L24 36 9.500 45l4.500-16L1.500 18.500l16-1.500z" fill="#d8d8d8"/></svg><div class="t nm" style="left:121.2px;top:685.88px">Layer 6</div><svg style="left:416px;top:689.48px" width="18.4" height="17.6" viewBox="0 0 46 44"><path d="M23 4C10 4 6 18 2 34h42C40 18 36 4 23 4z" fill="#8e8e8e"/><path d="M4 40h38" stroke="#8e8e8e" stroke-width="5"/></svg><svg style="left:441.6px;top:690.28px" width="16" height="16" viewBox="0 0 40 40"><path d="M20 2V38M2 20H38M8 8L32 32M32 8L8 32" stroke="#6c6c6c" stroke-width="4"/><circle cx="20" cy="20" r="7" fill="#6c6c6c"/></svg><svg style="left:462.4px;top:688.68px" width="20" height="20" viewBox="0 0 50 50"><path d="M6 44L44 6" stroke="#d0d0d0" stroke-width="7"/></svg><div class="cb" style="left:528.8px;top:689.28px"></div><div class="cb" style="left:552.8px;top:689.28px"></div><div class="cb" style="left:576.8px;top:689.28px"></div><svg style="left:620px;top:688.28px" width="21.6" height="20" viewBox="0 0 54 50"><path d="M34 8A18 18 0 1 0 44 30M30 18a8 8 0 1 0 6 10" stroke="#909090" stroke-width="6" fill="none"/></svg><div class="dd" style="top:688.08px"></div><div class="t nm" style="left:657.6px;top:685.88px;width:97.6px;overflow:hidden;font-size:16.4px">None</div><svg style="left:755.2px;top:691.88px" width="16.8" height="12.8" viewBox="0 0 42 32"><path d="M5 7L21 24L37 7" stroke="#c4c4c4" stroke-width="7" fill="none"/></svg><svg style="left:69.6px;top:712.88px" width="21.6" height="21.6" viewBox="0 0 54 54"><circle cx="27" cy="30" r="19" fill="none" stroke="#2f7fd0" stroke-width="8"/><path d="M18 6h18M38 12l6-6" stroke="#2f7fd0" stroke-width="7" fill="none"/></svg><svg style="left:96px;top:714.88px" width="17.6" height="17.6" viewBox="0 0 44 44"><path d="M6 2V38H42M16 38V20l12 12" stroke="#b8b8b8" stroke-width="7" fill="none"/></svg><div class="t" style="left:128.8px;top:710.88px;color:#c0c0c0">X Position</div><div class="t" style="left:416.8px;top:710.88px;font-size:15.6px"><span class="bl" style="position:static">319.2</span><span style="position:static;color:#a0a0a0;font-size:16px"> </span></div><svg style="left:638.4px;top:713.28px" width="21.6" height="20" viewBox="0 0 54 50"><path d="M34 8A18 18 0 1 0 44 30M30 18a8 8 0 1 0 6 10" stroke="#909090" stroke-width="6" fill="none"/></svg><svg style="left:69.6px;top:737.92px" width="21.6" height="21.6" viewBox="0 0 54 54"><circle cx="27" cy="30" r="19" fill="none" stroke="#2f7fd0" stroke-width="8"/><path d="M18 6h18M38 12l6-6" stroke="#2f7fd0" stroke-width="7" fill="none"/></svg><svg style="left:96px;top:739.92px" width="17.6" height="17.6" viewBox="0 0 44 44"><path d="M6 2V38H42M16 38V20l12 12" stroke="#b8b8b8" stroke-width="7" fill="none"/></svg><div class="t" style="left:128.8px;top:735.92px;color:#c0c0c0">Y Position</div><div class="t" style="left:416.8px;top:735.92px;font-size:15.6px"><span class="bl" style="position:static">236.4</span><span style="position:static;color:#a0a0a0;font-size:16px"> </span></div><svg style="left:638.4px;top:738.32px" width="21.6" height="20" viewBox="0 0 54 50"><path d="M34 8A18 18 0 1 0 44 30M30 18a8 8 0 1 0 6 10" stroke="#909090" stroke-width="6" fill="none"/></svg><svg style="left:69.6px;top:762.96px" width="21.6" height="21.6" viewBox="0 0 54 54"><circle cx="27" cy="30" r="19" fill="none" stroke="#2f7fd0" stroke-width="8"/><path d="M18 6h18M38 12l6-6" stroke="#2f7fd0" stroke-width="7" fill="none"/></svg><svg style="left:96px;top:764.96px" width="17.6" height="17.6" viewBox="0 0 44 44"><path d="M6 2V38H42M16 38V20l12 12" stroke="#b8b8b8" stroke-width="7" fill="none"/></svg><div class="t" style="left:128.8px;top:760.96px;color:#c0c0c0">Opacity</div><div class="t" style="left:416.8px;top:760.96px;font-size:15.6px"><span class="bl" style="position:static">45</span><span style="position:static;color:#a0a0a0;font-size:16px"> %</span></div><svg style="left:638.4px;top:763.36px" width="21.6" height="20" viewBox="0 0 54 50"><path d="M34 8A18 18 0 1 0 44 30M30 18a8 8 0 1 0 6 10" stroke="#909090" stroke-width="6" fill="none"/></svg><div class="lr" style="top:787.2px"></div><svg style="left:0.4px;top:791.6px" width="12.8" height="12.8" viewBox="0 0 26 26"><path d="M3 8L13 19L23 8" stroke="#a8a8a8" stroke-width="4.500" fill="none"/></svg><div style="left:15.2px;top:787.2px;width:23.6px;height:22.8px;background:#17171f"></div><div class="sw" style="top:789px;background-color:#44b84c"></div><div class="t nm" style="left:48px;top:786px">12</div><svg style="left:92.8px;top:788.8px" width="19.2" height="19.2" viewBox="0 0 48 48"><path d="M24 2l6.5 15 16 1.500-12.500 10.500 4.500 16L24 36 9.500 45l4.500-16L1.500 18.500l16-1.500z" fill="#d8d8d8"/></svg><div class="t nm" style="left:121.2px;top:786px">Interactive 13</div><svg style="left:416px;top:789.6px" width="18.4" height="17.6" viewBox="0 0 46 44"><path d="M23 4C10 4 6 18 2 34h42C40 18 36 4 23 4z" fill="#8e8e8e"/><path d="M4 40h38" stroke="#8e8e8e" stroke-width="5"/></svg><svg style="left:441.6px;top:790.4px" width="16" height="16" viewBox="0 0 40 40"><path d="M20 2V38M2 20H38M8 8L32 32M32 8L8 32" stroke="#6c6c6c" stroke-width="4"/><circle cx="20" cy="20" r="7" fill="#6c6c6c"/></svg><svg style="left:462.4px;top:788.8px" width="20" height="20" viewBox="0 0 50 50"><path d="M6 44L44 6" stroke="#d0d0d0" stroke-width="7"/></svg><div class="cb" style="left:528.8px;top:789.4px"></div><div class="cb" style="left:552.8px;top:789.4px"></div><div class="cb" style="left:576.8px;top:789.4px"></div><svg style="left:620px;top:788.4px" width="21.6" height="20" viewBox="0 0 54 50"><path d="M34 8A18 18 0 1 0 44 30M30 18a8 8 0 1 0 6 10" stroke="#909090" stroke-width="6" fill="none"/></svg><div class="dd" style="top:788.2px"></div><div class="t nm" style="left:657.6px;top:786px;width:97.6px;overflow:hidden;font-size:16.4px">None</div><svg style="left:755.2px;top:792px" width="16.8" height="12.8" viewBox="0 0 42 32"><path d="M5 7L21 24L37 7" stroke="#c4c4c4" stroke-width="7" fill="none"/></svg><svg style="left:69.6px;top:813px" width="21.6" height="21.6" viewBox="0 0 54 54"><circle cx="27" cy="30" r="19" fill="none" stroke="#2f7fd0" stroke-width="8"/><path d="M18 6h18M38 12l6-6" stroke="#2f7fd0" stroke-width="7" fill="none"/></svg><svg style="left:96px;top:815px" width="17.6" height="17.6" viewBox="0 0 44 44"><path d="M6 2V38H42M16 38V20l12 12" stroke="#b8b8b8" stroke-width="7" fill="none"/></svg><div class="t" style="left:128.8px;top:811px;color:#c0c0c0">Position</div><div class="t" style="left:416.8px;top:811px;font-size:15.6px"><span class="bl" style="position:static">334.4,205.5</span><span style="position:static;color:#a0a0a0;font-size:16px"> </span></div><svg style="left:638.4px;top:813.4px" width="21.6" height="20" viewBox="0 0 54 50"><path d="M34 8A18 18 0 1 0 44 30M30 18a8 8 0 1 0 6 10" stroke="#909090" stroke-width="6" fill="none"/></svg><div class="lr" style="top:837.24px"></div><svg style="left:0.4px;top:841.64px" width="12.8" height="12.8" viewBox="0 0 26 26"><path d="M3 8L13 19L23 8" stroke="#a8a8a8" stroke-width="4.500" fill="none"/></svg><div style="left:15.2px;top:837.24px;width:23.6px;height:22.8px;background:#17171f"></div><div class="sw" style="top:839.04px;background-color:#44b84c"></div><div class="t nm" style="left:48px;top:836.04px">13</div><svg style="left:92.8px;top:838.84px" width="19.2" height="19.2" viewBox="0 0 48 48"><path d="M24 2l6.5 15 16 1.500-12.500 10.500 4.500 16L24 36 9.500 45l4.500-16L1.500 18.500l16-1.500z" fill="#d8d8d8"/></svg><div class="t nm" style="left:121.2px;top:836.04px">Interactive 12</div><svg style="left:416px;top:839.64px" width="18.4" height="17.6" viewBox="0 0 46 44"><path d="M23 4C10 4 6 18 2 34h42C40 18 36 4 23 4z" fill="#8e8e8e"/><path d="M4 40h38" stroke="#8e8e8e" stroke-width="5"/></svg><svg style="left:441.6px;top:840.44px" width="16" height="16" viewBox="0 0 40 40"><path d="M20 2V38M2 20H38M8 8L32 32M32 8L8 32" stroke="#6c6c6c" stroke-width="4"/><circle cx="20" cy="20" r="7" fill="#6c6c6c"/></svg><svg style="left:462.4px;top:838.84px" width="20" height="20" viewBox="0 0 50 50"><path d="M6 44L44 6" stroke="#d0d0d0" stroke-width="7"/></svg><div class="cb" style="left:528.8px;top:839.44px"></div><div class="cb" style="left:552.8px;top:839.44px"></div><div class="cb" style="left:576.8px;top:839.44px"></div><svg style="left:620px;top:838.44px" width="21.6" height="20" viewBox="0 0 54 50"><path d="M34 8A18 18 0 1 0 44 30M30 18a8 8 0 1 0 6 10" stroke="#909090" stroke-width="6" fill="none"/></svg><div class="dd" style="top:838.24px"></div><div class="t nm" style="left:657.6px;top:836.04px;width:97.6px;overflow:hidden;font-size:16.4px">None</div><svg style="left:755.2px;top:842.04px" width="16.8" height="12.8" viewBox="0 0 42 32"><path d="M5 7L21 24L37 7" stroke="#c4c4c4" stroke-width="7" fill="none"/></svg><svg style="left:69.6px;top:863.08px" width="21.6" height="21.6" viewBox="0 0 54 54"><circle cx="27" cy="30" r="19" fill="none" stroke="#2f7fd0" stroke-width="8"/><path d="M18 6h18M38 12l6-6" stroke="#2f7fd0" stroke-width="7" fill="none"/></svg><svg style="left:96px;top:865.08px" width="17.6" height="17.6" viewBox="0 0 44 44"><path d="M6 2V38H42M16 38V20l12 12" stroke="#b8b8b8" stroke-width="7" fill="none"/></svg><div class="t" style="left:128.8px;top:861.08px;color:#c0c0c0">Position</div><div class="t" style="left:416.8px;top:861.08px;font-size:15.6px"><span class="bl" style="position:static">344.0,202.4</span><span style="position:static;color:#a0a0a0;font-size:16px"> </span></div><svg style="left:638.4px;top:863.48px" width="21.6" height="20" viewBox="0 0 54 50"><path d="M34 8A18 18 0 1 0 44 30M30 18a8 8 0 1 0 6 10" stroke="#909090" stroke-width="6" fill="none"/></svg><div class="lr" style="top:887.28px"></div><svg style="left:0.4px;top:891.68px" width="12.8" height="12.8" viewBox="0 0 26 26"><path d="M8 3L19 13L8 23" stroke="#a8a8a8" stroke-width="4.500" fill="none"/></svg><div style="left:15.2px;top:887.28px;width:23.6px;height:22.8px;background:#17171f"></div><div class="sw" style="top:889.08px;background-color:#44b84c"></div><div class="t nm" style="left:48px;top:886.08px">14</div><svg style="left:92.8px;top:888.88px" width="19.2" height="19.2" viewBox="0 0 48 48"><path d="M24 2l6.5 15 16 1.500-12.500 10.500 4.500 16L24 36 9.500 45l4.500-16L1.500 18.500l16-1.500z" fill="#d8d8d8"/></svg><div class="t nm" style="left:121.2px;top:886.08px">Interactive 11</div><svg style="left:416px;top:889.68px" width="18.4" height="17.6" viewBox="0 0 46 44"><path d="M23 4C10 4 6 18 2 34h42C40 18 36 4 23 4z" fill="#8e8e8e"/><path d="M4 40h38" stroke="#8e8e8e" stroke-width="5"/></svg><svg style="left:441.6px;top:890.48px" width="16" height="16" viewBox="0 0 40 40"><path d="M20 2V38M2 20H38M8 8L32 32M32 8L8 32" stroke="#6c6c6c" stroke-width="4"/><circle cx="20" cy="20" r="7" fill="#6c6c6c"/></svg><svg style="left:462.4px;top:888.88px" width="20" height="20" viewBox="0 0 50 50"><path d="M6 44L44 6" stroke="#d0d0d0" stroke-width="7"/></svg><div class="cb" style="left:528.8px;top:889.48px"></div><div class="cb" style="left:552.8px;top:889.48px"></div><div class="cb" style="left:576.8px;top:889.48px"></div><svg style="left:620px;top:888.48px" width="21.6" height="20" viewBox="0 0 54 50"><path d="M34 8A18 18 0 1 0 44 30M30 18a8 8 0 1 0 6 10" stroke="#909090" stroke-width="6" fill="none"/></svg><div class="dd" style="top:888.28px"></div><div class="t nm" style="left:657.6px;top:886.08px;width:97.6px;overflow:hidden;font-size:16.4px">None</div><svg style="left:755.2px;top:892.08px" width="16.8" height="12.8" viewBox="0 0 42 32"><path d="M5 7L21 24L37 7" stroke="#c4c4c4" stroke-width="7" fill="none"/></svg><div class="lr" style="top:912.32px"></div><svg style="left:0.4px;top:916.72px" width="12.8" height="12.8" viewBox="0 0 26 26"><path d="M3 8L13 19L23 8" stroke="#a8a8a8" stroke-width="4.500" fill="none"/></svg><div style="left:15.2px;top:912.32px;width:23.6px;height:22.8px;background:#17171f"></div><div class="sw" style="top:914.12px;background-color:#7484f4"></div><div class="t nm" style="left:48px;top:911.12px">15</div><svg style="left:92.8px;top:913.92px" width="19.2" height="19.2" viewBox="0 0 48 48"><path d="M24 2l6.5 15 16 1.500-12.500 10.500 4.500 16L24 36 9.500 45l4.500-16L1.500 18.500l16-1.500z" fill="#d8d8d8"/></svg><div class="t nm" style="left:121.2px;top:911.12px">Interactive 3</div><svg style="left:416px;top:914.72px" width="18.4" height="17.6" viewBox="0 0 46 44"><path d="M23 4C10 4 6 18 2 34h42C40 18 36 4 23 4z" fill="#8e8e8e"/><path d="M4 40h38" stroke="#8e8e8e" stroke-width="5"/></svg><svg style="left:441.6px;top:915.52px" width="16" height="16" viewBox="0 0 40 40"><path d="M20 2V38M2 20H38M8 8L32 32M32 8L8 32" stroke="#6c6c6c" stroke-width="4"/><circle cx="20" cy="20" r="7" fill="#6c6c6c"/></svg><svg style="left:462.4px;top:913.92px" width="20" height="20" viewBox="0 0 50 50"><path d="M6 44L44 6" stroke="#d0d0d0" stroke-width="7"/></svg><div class="cb" style="left:528.8px;top:914.52px"></div><div class="cb" style="left:552.8px;top:914.52px"></div><div class="cb" style="left:576.8px;top:914.52px"></div><svg style="left:620px;top:913.52px" width="21.6" height="20" viewBox="0 0 54 50"><path d="M34 8A18 18 0 1 0 44 30M30 18a8 8 0 1 0 6 10" stroke="#909090" stroke-width="6" fill="none"/></svg><div class="dd" style="top:913.32px"></div><div class="t nm" style="left:657.6px;top:911.12px;width:97.6px;overflow:hidden;font-size:16.4px">None</div><svg style="left:755.2px;top:917.12px" width="16.8" height="12.8" viewBox="0 0 42 32"><path d="M5 7L21 24L37 7" stroke="#c4c4c4" stroke-width="7" fill="none"/></svg><svg style="left:69.6px;top:938.16px" width="21.6" height="21.6" viewBox="0 0 54 54"><circle cx="27" cy="30" r="19" fill="none" stroke="#2f7fd0" stroke-width="8"/><path d="M18 6h18M38 12l6-6" stroke="#2f7fd0" stroke-width="7" fill="none"/></svg><svg style="left:96px;top:940.16px" width="17.6" height="17.6" viewBox="0 0 44 44"><path d="M6 2V38H42M16 38V20l12 12" stroke="#b8b8b8" stroke-width="7" fill="none"/></svg><div class="t" style="left:128.8px;top:936.16px;color:#c0c0c0">Scale</div><div style="left:416px;top:944.96px;width:18.4px;height:8.8px;border:2.8px solid #d4d4d4;border-radius:4.4px"></div><div class="t" style="left:440.8px;top:936.16px;font-size:15.6px"><span class="bl" style="position:static">100.0,100.0</span><span style="position:static;color:#a0a0a0;font-size:16px"> %</span></div><svg style="left:638.4px;top:938.56px" width="21.6" height="20" viewBox="0 0 54 50"><path d="M34 8A18 18 0 1 0 44 30M30 18a8 8 0 1 0 6 10" stroke="#909090" stroke-width="6" fill="none"/></svg><div class="lr" style="top:962.36px"></div><svg style="left:0.4px;top:966.76px" width="12.8" height="12.8" viewBox="0 0 26 26"><path d="M3 8L13 19L23 8" stroke="#a8a8a8" stroke-width="4.500" fill="none"/></svg><div style="left:15.2px;top:962.36px;width:23.6px;height:22.8px;background:#17171f"></div><div class="sw" style="top:964.16px;background-color:#7484f4"></div><div class="t nm" style="left:48px;top:961.16px">16</div><svg style="left:92.8px;top:963.96px" width="19.2" height="19.2" viewBox="0 0 48 48"><path d="M24 2l6.5 15 16 1.500-12.500 10.500 4.500 16L24 36 9.500 45l4.500-16L1.500 18.500l16-1.500z" fill="#d8d8d8"/></svg><div class="t nm" style="left:121.2px;top:961.16px">Interactive 2</div><svg style="left:416px;top:964.76px" width="18.4" height="17.6" viewBox="0 0 46 44"><path d="M23 4C10 4 6 18 2 34h42C40 18 36 4 23 4z" fill="#8e8e8e"/><path d="M4 40h38" stroke="#8e8e8e" stroke-width="5"/></svg><svg style="left:441.6px;top:965.56px" width="16" height="16" viewBox="0 0 40 40"><path d="M20 2V38M2 20H38M8 8L32 32M32 8L8 32" stroke="#6c6c6c" stroke-width="4"/><circle cx="20" cy="20" r="7" fill="#6c6c6c"/></svg><svg style="left:462.4px;top:963.96px" width="20" height="20" viewBox="0 0 50 50"><path d="M6 44L44 6" stroke="#d0d0d0" stroke-width="7"/></svg><div class="cb" style="left:528.8px;top:964.56px"></div><div class="cb" style="left:552.8px;top:964.56px"></div><div class="cb" style="left:576.8px;top:964.56px"></div><svg style="left:620px;top:963.56px" width="21.6" height="20" viewBox="0 0 54 50"><path d="M34 8A18 18 0 1 0 44 30M30 18a8 8 0 1 0 6 10" stroke="#909090" stroke-width="6" fill="none"/></svg><div class="dd" style="top:963.36px"></div><div class="t nm" style="left:657.6px;top:961.16px;width:97.6px;overflow:hidden;font-size:16.4px">None</div><svg style="left:755.2px;top:967.16px" width="16.8" height="12.8" viewBox="0 0 42 32"><path d="M5 7L21 24L37 7" stroke="#c4c4c4" stroke-width="7" fill="none"/></svg><svg style="left:69.6px;top:988.2px" width="21.6" height="21.6" viewBox="0 0 54 54"><circle cx="27" cy="30" r="19" fill="none" stroke="#2f7fd0" stroke-width="8"/><path d="M18 6h18M38 12l6-6" stroke="#2f7fd0" stroke-width="7" fill="none"/></svg><svg style="left:96px;top:990.2px" width="17.6" height="17.6" viewBox="0 0 44 44"><path d="M6 2V38H42M16 38V20l12 12" stroke="#b8b8b8" stroke-width="7" fill="none"/></svg><div class="t" style="left:128.8px;top:986.2px;color:#c0c0c0">Opacity</div><div class="t" style="left:416.8px;top:986.2px;font-size:15.6px"><span class="bl" style="position:static">100</span><span style="position:static;color:#a0a0a0;font-size:16px"> %</span></div><svg style="left:638.4px;top:988.6px" width="21.6" height="20" viewBox="0 0 54 50"><path d="M34 8A18 18 0 1 0 44 30M30 18a8 8 0 1 0 6 10" stroke="#909090" stroke-width="6" fill="none"/></svg><div class="lr" style="top:1012.44px"></div><svg style="left:0.4px;top:1016.84px" width="12.8" height="12.8" viewBox="0 0 26 26"><path d="M8 3L19 13L8 23" stroke="#a8a8a8" stroke-width="4.500" fill="none"/></svg><div style="left:15.2px;top:1012.44px;width:23.6px;height:22.8px;background:#17171f"></div><div class="sw" style="top:1014.24px;background-color:#7484f4"></div><div class="t nm" style="left:48px;top:1011.24px">17</div><svg style="left:92.8px;top:1014.04px" width="19.2" height="19.2" viewBox="0 0 48 48"><path d="M24 2l6.5 15 16 1.500-12.500 10.500 4.500 16L24 36 9.500 45l4.500-16L1.500 18.500l16-1.500z" fill="#d8d8d8"/></svg><div class="t nm" style="left:121.2px;top:1011.24px">Interactive</div><svg style="left:416px;top:1014.84px" width="18.4" height="17.6" viewBox="0 0 46 44"><path d="M23 4C10 4 6 18 2 34h42C40 18 36 4 23 4z" fill="#8e8e8e"/><path d="M4 40h38" stroke="#8e8e8e" stroke-width="5"/></svg><svg style="left:441.6px;top:1015.64px" width="16" height="16" viewBox="0 0 40 40"><path d="M20 2V38M2 20H38M8 8L32 32M32 8L8 32" stroke="#6c6c6c" stroke-width="4"/><circle cx="20" cy="20" r="7" fill="#6c6c6c"/></svg><svg style="left:462.4px;top:1014.04px" width="20" height="20" viewBox="0 0 50 50"><path d="M6 44L44 6" stroke="#d0d0d0" stroke-width="7"/></svg><div class="cb" style="left:528.8px;top:1014.64px"></div><div class="cb" style="left:552.8px;top:1014.64px"></div><div class="cb" style="left:576.8px;top:1014.64px"></div><svg style="left:620px;top:1013.64px" width="21.6" height="20" viewBox="0 0 54 50"><path d="M34 8A18 18 0 1 0 44 30M30 18a8 8 0 1 0 6 10" stroke="#909090" stroke-width="6" fill="none"/></svg><div class="dd" style="top:1013.44px"></div><div class="t nm" style="left:657.6px;top:1011.24px;width:97.6px;overflow:hidden;font-size:16.4px">None</div><svg style="left:755.2px;top:1017.24px" width="16.8" height="12.8" viewBox="0 0 42 32"><path d="M5 7L21 24L37 7" stroke="#c4c4c4" stroke-width="7" fill="none"/></svg><div class="lr" style="top:1037.48px"></div><svg style="left:0.4px;top:1041.88px" width="12.8" height="12.8" viewBox="0 0 26 26"><path d="M3 8L13 19L23 8" stroke="#a8a8a8" stroke-width="4.500" fill="none"/></svg><div style="left:15.2px;top:1037.48px;width:23.6px;height:22.8px;background:#17171f"></div><div class="sw" style="top:1039.28px;background-color:#a030a8"></div><div class="t nm" style="left:48px;top:1036.28px">18</div><svg style="left:92.8px;top:1039.08px" width="19.2" height="19.2" viewBox="0 0 48 48"><path d="M24 2l6.5 15 16 1.500-12.500 10.500 4.500 16L24 36 9.500 45l4.500-16L1.500 18.500l16-1.500z" fill="#d8d8d8"/></svg><div class="t nm" style="left:121.2px;top:1036.28px">Standard&amp;display 9</div><svg style="left:416px;top:1039.88px" width="18.4" height="17.6" viewBox="0 0 46 44"><path d="M23 4C10 4 6 18 2 34h42C40 18 36 4 23 4z" fill="#8e8e8e"/><path d="M4 40h38" stroke="#8e8e8e" stroke-width="5"/></svg><svg style="left:441.6px;top:1040.68px" width="16" height="16" viewBox="0 0 40 40"><path d="M20 2V38M2 20H38M8 8L32 32M32 8L8 32" stroke="#6c6c6c" stroke-width="4"/><circle cx="20" cy="20" r="7" fill="#6c6c6c"/></svg><svg style="left:462.4px;top:1039.08px" width="20" height="20" viewBox="0 0 50 50"><path d="M6 44L44 6" stroke="#d0d0d0" stroke-width="7"/></svg><div class="cb" style="left:528.8px;top:1039.68px"></div><div class="cb" style="left:552.8px;top:1039.68px"></div><div class="cb" style="left:576.8px;top:1039.68px"></div><svg style="left:620px;top:1038.68px" width="21.6" height="20" viewBox="0 0 54 50"><path d="M34 8A18 18 0 1 0 44 30M30 18a8 8 0 1 0 6 10" stroke="#909090" stroke-width="6" fill="none"/></svg><div class="dd" style="top:1038.48px"></div><div class="t nm" style="left:657.6px;top:1036.28px;width:97.6px;overflow:hidden;font-size:16.4px">19. Standard&amp;d</div><svg style="left:755.2px;top:1042.28px" width="16.8" height="12.8" viewBox="0 0 42 32"><path d="M5 7L21 24L37 7" stroke="#c4c4c4" stroke-width="7" fill="none"/></svg><svg style="left:53.2px;top:1066.88px" width="12.8" height="12.8" viewBox="0 0 26 26"><path d="M3 8L13 19L23 8" stroke="#a8a8a8" stroke-width="4.500" fill="none"/></svg><div style="left:72px;top:1066.08px;width:14.4px;height:14.4px;background:#f4e244"></div><div class="t" style="left:100px;top:1061.28px;color:#c0c0c0">Mask 1</div><div style="left:417.6px;top:1063.28px;width:92px;height:21.2px;background:#1b1b1b;border-radius:2.4px"></div><div class="t nm" style="left:424px;top:1061.28px;font-size:16.4px">Subtract</div><svg style="left:488px;top:1067.28px" width="16.8" height="12.8" viewBox="0 0 42 32"><path d="M5 7L21 24L37 7" stroke="#c4c4c4" stroke-width="7" fill="none"/></svg><div class="cb" style="left:519.2px;top:1064.68px;background:#191919"></div><div class="t" style="left:540px;top:1061.28px;font-size:16.4px;color:#c0c0c0">Inverted</div><svg style="left:94.4px;top:1088.32px" width="21.6" height="21.6" viewBox="0 0 54 54"><circle cx="27" cy="30" r="19" fill="none" stroke="#2f7fd0" stroke-width="8"/><path d="M18 6h18M38 12l6-6" stroke="#2f7fd0" stroke-width="7" fill="none"/></svg><svg style="left:120.8px;top:1090.32px" width="17.6" height="17.6" viewBox="0 0 44 44"><path d="M6 2V38H42M16 38V20l12 12" stroke="#b8b8b8" stroke-width="7" fill="none"/></svg><div class="t" style="left:153.6px;top:1086.32px;color:#c0c0c0">Mask Path</div><div class="t" style="left:416.8px;top:1086.32px;font-size:15.6px"><span class="bl" style="position:static">Shape...</span><span style="position:static;color:#a0a0a0;font-size:16px"> </span></div><svg style="left:638.4px;top:1088.72px" width="21.6" height="20" viewBox="0 0 54 50"><path d="M34 8A18 18 0 1 0 44 30M30 18a8 8 0 1 0 6 10" stroke="#909090" stroke-width="6" fill="none"/></svg><div class="lr" style="top:1112.56px"></div><svg style="left:0.4px;top:1116.96px" width="12.8" height="12.8" viewBox="0 0 26 26"><path d="M3 8L13 19L23 8" stroke="#a8a8a8" stroke-width="4.500" fill="none"/></svg><div style="left:15.2px;top:1112.56px;width:23.6px;height:22.8px;background:#17171f"></div><div class="sw" style="top:1114.36px;background-color:#a030a8"></div><div class="t nm" style="left:48px;top:1111.36px">19</div><svg style="left:92.8px;top:1114.16px" width="19.2" height="19.2" viewBox="0 0 48 48"><path d="M24 2l6.5 15 16 1.500-12.500 10.500 4.500 16L24 36 9.500 45l4.500-16L1.500 18.500l16-1.500z" fill="#d8d8d8"/></svg><div class="t nm" style="left:121.2px;top:1111.36px">Standard&amp;display 6</div><svg style="left:416px;top:1114.96px" width="18.4" height="17.6" viewBox="0 0 46 44"><path d="M23 4C10 4 6 18 2 34h42C40 18 36 4 23 4z" fill="#8e8e8e"/><path d="M4 40h38" stroke="#8e8e8e" stroke-width="5"/></svg><svg style="left:441.6px;top:1115.76px" width="16" height="16" viewBox="0 0 40 40"><path d="M20 2V38M2 20H38M8 8L32 32M32 8L8 32" stroke="#6c6c6c" stroke-width="4"/><circle cx="20" cy="20" r="7" fill="#6c6c6c"/></svg><svg style="left:462.4px;top:1114.16px" width="20" height="20" viewBox="0 0 50 50"><path d="M6 44L44 6" stroke="#d0d0d0" stroke-width="7"/></svg><div class="cb" style="left:528.8px;top:1114.76px"></div><div class="cb" style="left:552.8px;top:1114.76px"></div><div class="cb" style="left:576.8px;top:1114.76px"></div><svg style="left:620px;top:1113.76px" width="21.6" height="20" viewBox="0 0 54 50"><path d="M34 8A18 18 0 1 0 44 30M30 18a8 8 0 1 0 6 10" stroke="#909090" stroke-width="6" fill="none"/></svg><div class="dd" style="top:1113.56px"></div><div class="t nm" style="left:657.6px;top:1111.36px;width:97.6px;overflow:hidden;font-size:16.4px">None</div><svg style="left:755.2px;top:1117.36px" width="16.8" height="12.8" viewBox="0 0 42 32"><path d="M5 7L21 24L37 7" stroke="#c4c4c4" stroke-width="7" fill="none"/></svg><svg style="left:53.2px;top:1141.96px" width="12.8" height="12.8" viewBox="0 0 26 26"><path d="M3 8L13 19L23 8" stroke="#a8a8a8" stroke-width="4.500" fill="none"/></svg><div style="left:72px;top:1141.16px;width:14.4px;height:14.4px;background:#d8f4f0"></div><div class="t" style="left:100px;top:1136.36px;color:#c0c0c0">Mask 1</div><div style="left:417.6px;top:1138.36px;width:92px;height:21.2px;background:#1b1b1b;border-radius:2.4px"></div><div class="t nm" style="left:424px;top:1136.36px;font-size:16.4px">Subtract</div><svg style="left:488px;top:1142.36px" width="16.8" height="12.8" viewBox="0 0 42 32"><path d="M5 7L21 24L37 7" stroke="#c4c4c4" stroke-width="7" fill="none"/></svg><div class="cb" style="left:519.2px;top:1139.76px;background:#191919"></div><div class="t" style="left:540px;top:1136.36px;font-size:16.4px;color:#c0c0c0">Inverted</div><svg style="left:94.4px;top:1163.4px" width="21.6" height="21.6" viewBox="0 0 54 54"><circle cx="27" cy="30" r="19" fill="none" stroke="#2f7fd0" stroke-width="8"/><path d="M18 6h18M38 12l6-6" stroke="#2f7fd0" stroke-width="7" fill="none"/></svg><svg style="left:120.8px;top:1165.4px" width="17.6" height="17.6" viewBox="0 0 44 44"><path d="M6 2V38H42M16 38V20l12 12" stroke="#b8b8b8" stroke-width="7" fill="none"/></svg><div class="t" style="left:153.6px;top:1161.4px;color:#c0c0c0">Mask Path</div><div class="t" style="left:416.8px;top:1161.4px;font-size:15.6px"><span class="bl" style="position:static">Shape...</span><span style="position:static;color:#a0a0a0;font-size:16px"> </span></div><svg style="left:638.4px;top:1163.8px" width="21.6" height="20" viewBox="0 0 54 50"><path d="M34 8A18 18 0 1 0 44 30M30 18a8 8 0 1 0 6 10" stroke="#909090" stroke-width="6" fill="none"/></svg><svg style="left:69.6px;top:1188.44px" width="21.6" height="21.6" viewBox="0 0 54 54"><circle cx="27" cy="30" r="19" fill="none" stroke="#2f7fd0" stroke-width="8"/><path d="M18 6h18M38 12l6-6" stroke="#2f7fd0" stroke-width="7" fill="none"/></svg><svg style="left:96px;top:1190.44px" width="17.6" height="17.6" viewBox="0 0 44 44"><path d="M6 2V38H42M16 38V20l12 12" stroke="#b8b8b8" stroke-width="7" fill="none"/></svg><div class="t" style="left:128.8px;top:1186.44px;color:#c0c0c0">Y Position</div><div class="t" style="left:416.8px;top:1186.44px;font-size:15.6px"><span class="bl" style="position:static">294.0</span><span style="position:static;color:#a0a0a0;font-size:16px"> </span></div><svg style="left:638.4px;top:1188.84px" width="21.6" height="20" viewBox="0 0 54 50"><path d="M34 8A18 18 0 1 0 44 30M30 18a8 8 0 1 0 6 10" stroke="#909090" stroke-width="6" fill="none"/></svg><div class="lr" style="top:1212.68px"></div><svg style="left:0.4px;top:1217.04px" width="12.8" height="12.8" viewBox="0 0 26 26"><path d="M8 3L19 13L8 23" stroke="#a8a8a8" stroke-width="4.500" fill="none"/></svg><div style="left:15.2px;top:1212.68px;width:23.6px;height:22.8px;background:#17171f"></div><div class="sw" style="top:1214.48px;background-color:#b4dcd4"></div><div class="t nm" style="left:48px;top:1211.48px">20</div><svg style="left:92.8px;top:1214.24px" width="19.2" height="19.2" viewBox="0 0 48 48"><path d="M24 2l6.5 15 16 1.500-12.500 10.500 4.500 16L24 36 9.500 45l4.500-16L1.500 18.500l16-1.500z" fill="#d8d8d8"/></svg><div class="t nm" style="left:121.2px;top:1211.48px">Standard&amp;display 3</div><svg style="left:416px;top:1215.04px" width="18.4" height="17.6" viewBox="0 0 46 44"><path d="M23 4C10 4 6 18 2 34h42C40 18 36 4 23 4z" fill="#8e8e8e"/><path d="M4 40h38" stroke="#8e8e8e" stroke-width="5"/></svg><svg style="left:441.6px;top:1215.88px" width="16" height="16" viewBox="0 0 40 40"><path d="M20 2V38M2 20H38M8 8L32 32M32 8L8 32" stroke="#6c6c6c" stroke-width="4"/><circle cx="20" cy="20" r="7" fill="#6c6c6c"/></svg><svg style="left:462.4px;top:1214.24px" width="20" height="20" viewBox="0 0 50 50"><path d="M6 44L44 6" stroke="#d0d0d0" stroke-width="7"/></svg><div class="cb" style="left:528.8px;top:1214.88px"></div><div class="cb" style="left:552.8px;top:1214.88px"></div><div class="cb" style="left:576.8px;top:1214.88px"></div><svg style="left:620px;top:1213.88px" width="21.6" height="20" viewBox="0 0 54 50"><path d="M34 8A18 18 0 1 0 44 30M30 18a8 8 0 1 0 6 10" stroke="#909090" stroke-width="6" fill="none"/></svg><div class="dd" style="top:1213.68px"></div><div class="t nm" style="left:657.6px;top:1211.48px;width:97.6px;overflow:hidden;font-size:16.4px">None</div><svg style="left:755.2px;top:1217.48px" width="16.8" height="12.8" viewBox="0 0 42 32"><path d="M5 7L21 24L37 7" stroke="#c4c4c4" stroke-width="7" fill="none"/></svg><div class="lr" style="top:1237.68px"></div><svg style="left:0.4px;top:1242.08px" width="12.8" height="12.8" viewBox="0 0 26 26"><path d="M8 3L19 13L8 23" stroke="#a8a8a8" stroke-width="4.500" fill="none"/></svg><div style="left:15.2px;top:1237.68px;width:23.6px;height:22.8px;background:#17171f"></div><div class="sw" style="top:1239.48px;background-color:#e23c3c"></div><div class="t nm" style="left:48px;top:1236.48px">21</div><svg style="left:92.8px;top:1239.28px" width="19.2" height="19.2" viewBox="0 0 48 48"><path d="M24 2l6.5 15 16 1.500-12.500 10.500 4.500 16L24 36 9.500 45l4.500-16L1.500 18.500l16-1.500z" fill="#d8d8d8"/></svg><div class="t nm" style="left:121.2px;top:1236.48px">Standard&amp;display 8</div><svg style="left:416px;top:1240.08px" width="18.4" height="17.6" viewBox="0 0 46 44"><path d="M23 4C10 4 6 18 2 34h42C40 18 36 4 23 4z" fill="#8e8e8e"/><path d="M4 40h38" stroke="#8e8e8e" stroke-width="5"/></svg><svg style="left:441.6px;top:1240.88px" width="16" height="16" viewBox="0 0 40 40"><path d="M20 2V38M2 20H38M8 8L32 32M32 8L8 32" stroke="#6c6c6c" stroke-width="4"/><circle cx="20" cy="20" r="7" fill="#6c6c6c"/></svg><svg style="left:462.4px;top:1239.28px" width="20" height="20" viewBox="0 0 50 50"><path d="M6 44L44 6" stroke="#d0d0d0" stroke-width="7"/></svg><div class="cb" style="left:528.8px;top:1239.88px"></div><div class="cb" style="left:552.8px;top:1239.88px"></div><div class="cb" style="left:576.8px;top:1239.88px"></div><svg style="left:620px;top:1238.88px" width="21.6" height="20" viewBox="0 0 54 50"><path d="M34 8A18 18 0 1 0 44 30M30 18a8 8 0 1 0 6 10" stroke="#909090" stroke-width="6" fill="none"/></svg><div class="dd" style="top:1238.68px"></div><div class="t nm" style="left:657.6px;top:1236.48px;width:97.6px;overflow:hidden;font-size:16.4px">None</div><svg style="left:755.2px;top:1242.48px" width="16.8" height="12.8" viewBox="0 0 42 32"><path d="M5 7L21 24L37 7" stroke="#c4c4c4" stroke-width="7" fill="none"/></svg><div class="lr" style="top:1262.72px"></div><svg style="left:0.4px;top:1267.12px" width="12.8" height="12.8" viewBox="0 0 26 26"><path d="M8 3L19 13L8 23" stroke="#a8a8a8" stroke-width="4.500" fill="none"/></svg><div style="left:15.2px;top:1262.72px;width:23.6px;height:22.8px;background:#17171f"></div><div class="sw" style="top:1264.52px;background-color:#7484f4"></div><div class="t nm" style="left:48px;top:1261.52px">22</div><svg style="left:92.8px;top:1264.32px" width="19.2" height="19.2" viewBox="0 0 48 48"><path d="M24 2l6.5 15 16 1.500-12.500 10.500 4.500 16L24 36 9.500 45l4.500-16L1.500 18.500l16-1.500z" fill="#d8d8d8"/></svg><div class="t nm" style="left:121.2px;top:1261.52px">Standard&amp;display 4</div><svg style="left:416px;top:1265.12px" width="18.4" height="17.6" viewBox="0 0 46 44"><path d="M23 4C10 4 6 18 2 34h42C40 18 36 4 23 4z" fill="#8e8e8e"/><path d="M4 40h38" stroke="#8e8e8e" stroke-width="5"/></svg><svg style="left:441.6px;top:1265.92px" width="16" height="16" viewBox="0 0 40 40"><path d="M20 2V38M2 20H38M8 8L32 32M32 8L8 32" stroke="#6c6c6c" stroke-width="4"/><circle cx="20" cy="20" r="7" fill="#6c6c6c"/></svg><svg style="left:462.4px;top:1264.32px" width="20" height="20" viewBox="0 0 50 50"><path d="M6 44L44 6" stroke="#d0d0d0" stroke-width="7"/></svg><div class="cb" style="left:528.8px;top:1264.92px"></div><div class="cb" style="left:552.8px;top:1264.92px"></div><div class="cb" style="left:576.8px;top:1264.92px"></div><svg style="left:620px;top:1263.92px" width="21.6" height="20" viewBox="0 0 54 50"><path d="M34 8A18 18 0 1 0 44 30M30 18a8 8 0 1 0 6 10" stroke="#909090" stroke-width="6" fill="none"/></svg><div class="dd" style="top:1263.72px"></div><div class="t nm" style="left:657.6px;top:1261.52px;width:97.6px;overflow:hidden;font-size:16.4px">None</div><svg style="left:755.2px;top:1267.52px" width="16.8" height="12.8" viewBox="0 0 42 32"><path d="M5 7L21 24L37 7" stroke="#c4c4c4" stroke-width="7" fill="none"/></svg><div class="lr" style="top:1287.76px"></div><svg style="left:0.4px;top:1292.16px" width="12.8" height="12.8" viewBox="0 0 26 26"><path d="M8 3L19 13L8 23" stroke="#a8a8a8" stroke-width="4.500" fill="none"/></svg><div style="left:15.2px;top:1287.76px;width:23.6px;height:22.8px;background:#17171f"></div><div class="sw" style="top:1289.56px;background-color:#7484f4"></div><div class="t nm" style="left:48px;top:1286.56px">23</div><svg style="left:92.8px;top:1289.36px" width="19.2" height="19.2" viewBox="0 0 48 48"><path d="M24 2l6.5 15 16 1.500-12.500 10.500 4.500 16L24 36 9.500 45l4.500-16L1.500 18.500l16-1.500z" fill="#d8d8d8"/></svg><div class="t nm" style="left:121.2px;top:1286.56px">Standard&amp;display 2</div><svg style="left:416px;top:1290.16px" width="18.4" height="17.6" viewBox="0 0 46 44"><path d="M23 4C10 4 6 18 2 34h42C40 18 36 4 23 4z" fill="#8e8e8e"/><path d="M4 40h38" stroke="#8e8e8e" stroke-width="5"/></svg><svg style="left:441.6px;top:1290.96px" width="16" height="16" viewBox="0 0 40 40"><path d="M20 2V38M2 20H38M8 8L32 32M32 8L8 32" stroke="#6c6c6c" stroke-width="4"/><circle cx="20" cy="20" r="7" fill="#6c6c6c"/></svg><svg style="left:462.4px;top:1289.36px" width="20" height="20" viewBox="0 0 50 50"><path d="M6 44L44 6" stroke="#d0d0d0" stroke-width="7"/></svg><div class="cb" style="left:528.8px;top:1289.96px"></div><div class="cb" style="left:552.8px;top:1289.96px"></div><div class="cb" style="left:576.8px;top:1289.96px"></div><svg style="left:620px;top:1288.96px" width="21.6" height="20" viewBox="0 0 54 50"><path d="M34 8A18 18 0 1 0 44 30M30 18a8 8 0 1 0 6 10" stroke="#909090" stroke-width="6" fill="none"/></svg><div class="dd" style="top:1288.76px"></div><div class="t nm" style="left:657.6px;top:1286.56px;width:97.6px;overflow:hidden;font-size:16.4px">None</div><svg style="left:755.2px;top:1292.56px" width="16.8" height="12.8" viewBox="0 0 42 32"><path d="M5 7L21 24L37 7" stroke="#c4c4c4" stroke-width="7" fill="none"/></svg><div style="left:803.2px;top:54.4px;width:10.4px;height:1609.6px;background:#1b1b1b"></div><div style="left:813.6px;top:85.2px;width:4.8px;height:1578.8px;background:#292929"></div><div style="left:818.4px;top:85.2px;width:1781.6px;height:1578.8px;background:#252525"></div><div class="trk" style="top:86.6px"></div><div class="trk" style="top:111.64px"></div><div class="trk" style="top:136.64px"></div><div class="trk" style="top:161.68px"></div><div class="trk" style="top:186.72px"></div><div class="trk" style="top:211.72px"></div><div class="trk" style="top:236.76px"></div><div class="trk" style="top:261.8px"></div><div class="trk" style="top:286.84px"></div><div class="trk" style="top:311.84px"></div><div class="trk" style="top:336.88px"></div><div class="trk" style="top:361.92px"></div><div class="trk" style="top:386.92px"></div><div class="trk" style="top:411.96px"></div><div class="trk" style="top:437px"></div><div class="trk" style="top:462px"></div><div class="trk" style="top:487.04px"></div><div class="trk" style="top:512.08px"></div><div class="trk" style="top:537.12px"></div><div class="trk" style="top:562.12px"></div><div class="trk" style="top:587.16px"></div><div class="trk" style="top:612.2px"></div><div class="trk" style="top:637.2px"></div><div class="trk" style="top:662.24px"></div><div class="trk" style="top:687.28px"></div><div class="trk" style="top:712.28px"></div><div class="trk" style="top:737.32px"></div><div class="trk" style="top:762.36px"></div><div class="trk" style="top:787.4px"></div><div class="trk" style="top:812.4px"></div><div class="trk" style="top:837.44px"></div><div class="trk" style="top:862.48px"></div><div class="trk" style="top:887.48px"></div><div class="trk" style="top:912.52px"></div><div class="trk" style="top:937.56px"></div><div class="trk" style="top:962.56px"></div><div class="trk" style="top:987.6px"></div><div class="trk" style="top:1012.64px"></div><div class="trk" style="top:1037.68px"></div><div class="trk" style="top:1062.68px"></div><div class="trk" style="top:1087.72px"></div><div class="trk" style="top:1112.76px"></div><div class="trk" style="top:1137.76px"></div><div class="trk" style="top:1162.8px"></div><div class="trk" style="top:1187.84px"></div><div class="trk" style="top:1212.88px"></div><div class="trk" style="top:1237.88px"></div><div class="trk" style="top:1262.92px"></div><div class="trk" style="top:1287.96px"></div><div style="left:818.4px;top:1311.56px;width:1781.6px;height:352.44px;background:#303030"></div><div class="bar" style="left:820.4px;top:86.6px;width:1781.6px;background-color:#883b3f"></div><div class="bar" style="left:820.4px;top:111.64px;width:76px;background:#3d3f3f"></div><div class="bar" style="left:896.4px;top:111.64px;width:1705.6px;background-color:#a87428"></div><div class="bar" style="left:820.4px;top:161.68px;width:76px;background:#3d3f3f"></div><div class="bar" style="left:896.4px;top:161.68px;width:1705.6px;background-color:#5a659c"></div><div class="bar" style="left:820.4px;top:211.72px;width:76px;background:#3d3f3f"></div><div class="bar" style="left:896.4px;top:211.72px;width:1705.6px;background-color:#989048"></div><div class="bar" style="left:820.4px;top:261.8px;width:76px;background:#3d3f3f"></div><div class="bar" style="left:896.4px;top:261.8px;width:1705.6px;background-color:#5a659c"></div><div class="bar" style="left:820.4px;top:286.84px;width:1781.6px;background-color:#5a659c"></div><div class="bar" style="left:820.4px;top:462px;width:1781.6px;background-color:#5a659c"></div><div class="bar" style="left:820.4px;top:487.04px;width:1781.6px;background-color:#3d7878"></div><div class="bar" style="left:820.4px;top:562.12px;width:1781.6px;background-color:#b09478"></div><div class="bar" style="left:820.4px;top:587.16px;width:1781.6px;background-color:#467c46"></div><div class="bar" style="left:820.4px;top:687.28px;width:1781.6px;background-color:#467c46"></div><div class="bar" style="left:820.4px;top:787.4px;width:1781.6px;background-color:#467c46"></div><div class="bar" style="left:820.4px;top:837.44px;width:1781.6px;background-color:#467c46"></div><div class="bar" style="left:820.4px;top:887.48px;width:1781.6px;background-color:#467c46"></div><div class="bar" style="left:820.4px;top:912.52px;width:1781.6px;background-color:#5a659c"></div><div class="bar" style="left:820.4px;top:962.56px;width:1781.6px;background-color:#5a659c"></div><div class="bar" style="left:820.4px;top:1012.64px;width:1781.6px;background-color:#5a659c"></div><div class="bar" style="left:820.4px;top:1037.68px;width:1781.6px;background-color:#72306f"></div><div class="bar" style="left:820.4px;top:1112.76px;width:1781.6px;background-color:#72306f"></div><div class="bar" style="left:820.4px;top:1212.88px;width:1781.6px;background-color:#7f9693"></div><div class="bar" style="left:820.4px;top:1237.88px;width:1781.6px;background-color:#883b3f"></div><div class="bar" style="left:820.4px;top:1262.92px;width:1781.6px;background-color:#5a659c"></div><div class="bar" style="left:820.4px;top:1287.96px;width:1781.6px;background-color:#5a659c"></div><svg style="left:1668.4px;top:136.16px" width="23.2" height="23.2" viewBox="0 0 50 50"><path d="M30 4L8 25L30 46L38 38L25 25L38 12Z" fill="#dcdcdc" stroke="#1c1c1c" stroke-width="4" stroke-linejoin="round"/></svg><svg style="left:1714px;top:136.16px" width="23.2" height="23.2" viewBox="0 0 50 50"><path d="M20 4L42 25L20 46L12 38L25 25L12 12Z" fill="#dcdcdc" stroke="#1c1c1c" stroke-width="4" stroke-linejoin="round"/></svg><svg style="left:1382.8px;top:186.24px" width="23.2" height="23.2" viewBox="0 0 50 50"><path d="M30 4L8 25L30 46L38 38L25 25L38 12Z" fill="#dcdcdc" stroke="#1c1c1c" stroke-width="4" stroke-linejoin="round"/></svg><svg style="left:1428.4px;top:186.24px" width="23.2" height="23.2" viewBox="0 0 50 50"><path d="M20 4L42 25L20 46L12 38L25 25L12 12Z" fill="#dcdcdc" stroke="#1c1c1c" stroke-width="4" stroke-linejoin="round"/></svg><svg style="left:1620.4px;top:186.24px" width="23.2" height="23.2" viewBox="0 0 50 50"><path d="M30 4L8 25L30 46L38 38L25 25L38 12Z" fill="#dcdcdc" stroke="#1c1c1c" stroke-width="4" stroke-linejoin="round"/></svg><svg style="left:1666px;top:186.24px" width="23.2" height="23.2" viewBox="0 0 50 50"><path d="M20 4L42 25L20 46L12 38L25 25L12 12Z" fill="#dcdcdc" stroke="#1c1c1c" stroke-width="4" stroke-linejoin="round"/></svg><svg style="left:1334px;top:236.28px" width="23.2" height="23.2" viewBox="0 0 50 50"><path d="M30 4L8 25L30 46L38 38L25 25L38 12Z" fill="#dcdcdc" stroke="#1c1c1c" stroke-width="4" stroke-linejoin="round"/></svg><svg style="left:1380.4px;top:236.28px" width="23.2" height="23.2" viewBox="0 0 50 50"><path d="M20 4L42 25L20 46L12 38L25 25L12 12Z" fill="#dcdcdc" stroke="#1c1c1c" stroke-width="4" stroke-linejoin="round"/></svg><svg style="left:1334px;top:311.36px" width="23.2" height="23.2" viewBox="0 0 50 50"><path d="M30 4L8 25L30 46L38 38L25 25L38 12Z" fill="#dcdcdc" stroke="#1c1c1c" stroke-width="4" stroke-linejoin="round"/></svg><svg style="left:1428.4px;top:311.36px" width="23.2" height="23.2" viewBox="0 0 50 50"><path d="M20 4L42 25L20 46L12 38L25 25L12 12Z" fill="#dcdcdc" stroke="#1c1c1c" stroke-width="4" stroke-linejoin="round"/></svg><svg style="left:1620.4px;top:311.36px" width="23.2" height="23.2" viewBox="0 0 50 50"><path d="M30 4L8 25L30 46L38 38L25 25L38 12Z" fill="#dcdcdc" stroke="#1c1c1c" stroke-width="4" stroke-linejoin="round"/></svg><svg style="left:1714px;top:311.36px" width="23.2" height="23.2" viewBox="0 0 50 50"><path d="M20 4L42 25L20 46L12 38L25 25L12 12Z" fill="#dcdcdc" stroke="#1c1c1c" stroke-width="4" stroke-linejoin="round"/></svg><svg style="left:1334px;top:361.44px" width="23.2" height="23.2" viewBox="0 0 50 50"><path d="M30 4L8 25L30 46L38 38L25 25L38 12Z" fill="#dcdcdc" stroke="#1c1c1c" stroke-width="4" stroke-linejoin="round"/></svg><svg style="left:1428.4px;top:361.44px" width="23.2" height="23.2" viewBox="0 0 50 50"><path d="M20 4L42 25L20 46L12 38L25 25L12 12Z" fill="#dcdcdc" stroke="#1c1c1c" stroke-width="4" stroke-linejoin="round"/></svg><svg style="left:1620.4px;top:361.44px" width="23.2" height="23.2" viewBox="0 0 50 50"><path d="M30 4L8 25L30 46L38 38L25 25L38 12Z" fill="#dcdcdc" stroke="#1c1c1c" stroke-width="4" stroke-linejoin="round"/></svg><svg style="left:1714px;top:361.44px" width="23.2" height="23.2" viewBox="0 0 50 50"><path d="M20 4L42 25L20 46L12 38L25 25L12 12Z" fill="#dcdcdc" stroke="#1c1c1c" stroke-width="4" stroke-linejoin="round"/></svg><svg style="left:1334px;top:411.48px" width="23.2" height="23.2" viewBox="0 0 50 50"><path d="M30 4L8 25L30 46L38 38L25 25L38 12Z" fill="#dcdcdc" stroke="#1c1c1c" stroke-width="4" stroke-linejoin="round"/></svg><svg style="left:1428.4px;top:411.48px" width="23.2" height="23.2" viewBox="0 0 50 50"><path d="M20 4L42 25L20 46L12 38L25 25L12 12Z" fill="#dcdcdc" stroke="#1c1c1c" stroke-width="4" stroke-linejoin="round"/></svg><svg style="left:1620.4px;top:411.48px" width="23.2" height="23.2" viewBox="0 0 50 50"><path d="M30 4L8 25L30 46L38 38L25 25L38 12Z" fill="#dcdcdc" stroke="#1c1c1c" stroke-width="4" stroke-linejoin="round"/></svg><svg style="left:1714px;top:411.48px" width="23.2" height="23.2" viewBox="0 0 50 50"><path d="M20 4L42 25L20 46L12 38L25 25L12 12Z" fill="#dcdcdc" stroke="#1c1c1c" stroke-width="4" stroke-linejoin="round"/></svg><svg style="left:809.2px;top:536.6px" width="23.2" height="23.2" viewBox="0 0 50 50"><path d="M30 4L8 25L30 46L38 38L25 25L38 12Z" fill="#dcdcdc" stroke="#1c1c1c" stroke-width="4" stroke-linejoin="round"/></svg><svg style="left:890.8px;top:536.6px" width="23.2" height="23.2" viewBox="0 0 50 50"><path d="M20 4L42 25L20 46L12 38L25 25L12 12Z" fill="#dcdcdc" stroke="#1c1c1c" stroke-width="4" stroke-linejoin="round"/></svg><svg style="left:1066.8px;top:611.72px" width="23.2" height="23.2" viewBox="0 0 50 50"><path d="M10 4H40V12L30 25L40 38V46H10V38L20 25L10 12Z" fill="#dcdcdc" stroke="#1c1c1c" stroke-width="4" stroke-linejoin="round"/></svg><svg style="left:1495.6px;top:611.72px" width="23.2" height="23.2" viewBox="0 0 50 50"><path d="M10 4H40V12L30 25L40 38V46H10V38L20 25L10 12Z" fill="#dcdcdc" stroke="#1c1c1c" stroke-width="4" stroke-linejoin="round"/></svg><svg style="left:1810px;top:611.72px" width="23.2" height="23.2" viewBox="0 0 50 50"><path d="M10 4H40V12L30 25L40 38V46H10V38L20 25L10 12Z" fill="#dcdcdc" stroke="#1c1c1c" stroke-width="4" stroke-linejoin="round"/></svg><svg style="left:2012.8px;top:613.72px" width="19.2" height="19.2" viewBox="0 0 42 42"><circle cx="21" cy="21" r="16" fill="#dcdcdc" stroke="#1c1c1c" stroke-width="5"/></svg><svg style="left:2238.8px;top:611.72px" width="23.2" height="23.2" viewBox="0 0 50 50"><path d="M10 4H40V12L30 25L40 38V46H10V38L20 25L10 12Z" fill="#dcdcdc" stroke="#1c1c1c" stroke-width="4" stroke-linejoin="round"/></svg><svg style="left:1066.8px;top:636.72px" width="23.2" height="23.2" viewBox="0 0 50 50"><path d="M10 4H40V12L30 25L40 38V46H10V38L20 25L10 12Z" fill="#dcdcdc" stroke="#1c1c1c" stroke-width="4" stroke-linejoin="round"/></svg><svg style="left:1497.6px;top:638.72px" width="19.2" height="19.2" viewBox="0 0 42 42"><circle cx="21" cy="21" r="16" fill="#dcdcdc" stroke="#1c1c1c" stroke-width="5"/></svg><svg style="left:1810px;top:636.72px" width="23.2" height="23.2" viewBox="0 0 50 50"><path d="M10 4H40V12L30 25L40 38V46H10V38L20 25L10 12Z" fill="#dcdcdc" stroke="#1c1c1c" stroke-width="4" stroke-linejoin="round"/></svg><svg style="left:2012.8px;top:638.72px" width="19.2" height="19.2" viewBox="0 0 42 42"><circle cx="21" cy="21" r="16" fill="#dcdcdc" stroke="#1c1c1c" stroke-width="5"/></svg><svg style="left:2238.8px;top:636.72px" width="23.2" height="23.2" viewBox="0 0 50 50"><path d="M10 4H40V12L30 25L40 38V46H10V38L20 25L10 12Z" fill="#dcdcdc" stroke="#1c1c1c" stroke-width="4" stroke-linejoin="round"/></svg><svg style="left:950.8px;top:661.76px" width="23.2" height="23.2" viewBox="0 0 50 50"><path d="M10 4H40V12L30 25L40 38V46H10V38L20 25L10 12Z" fill="#dcdcdc" stroke="#1c1c1c" stroke-width="4" stroke-linejoin="round"/></svg><svg style="left:1166px;top:661.76px" width="23.2" height="23.2" viewBox="0 0 50 50"><path d="M10 4H40V12L30 25L40 38V46H10V38L20 25L10 12Z" fill="#dcdcdc" stroke="#1c1c1c" stroke-width="4" stroke-linejoin="round"/></svg><svg style="left:1066.8px;top:711.8px" width="23.2" height="23.2" viewBox="0 0 50 50"><path d="M10 4H40V12L30 25L40 38V46H10V38L20 25L10 12Z" fill="#dcdcdc" stroke="#1c1c1c" stroke-width="4" stroke-linejoin="round"/></svg><svg style="left:1495.6px;top:711.8px" width="23.2" height="23.2" viewBox="0 0 50 50"><path d="M10 4H40V12L30 25L40 38V46H10V38L20 25L10 12Z" fill="#dcdcdc" stroke="#1c1c1c" stroke-width="4" stroke-linejoin="round"/></svg><svg style="left:1810px;top:711.8px" width="23.2" height="23.2" viewBox="0 0 50 50"><path d="M10 4H40V12L30 25L40 38V46H10V38L20 25L10 12Z" fill="#dcdcdc" stroke="#1c1c1c" stroke-width="4" stroke-linejoin="round"/></svg><svg style="left:2012.8px;top:713.8px" width="19.2" height="19.2" viewBox="0 0 42 42"><circle cx="21" cy="21" r="16" fill="#dcdcdc" stroke="#1c1c1c" stroke-width="5"/></svg><svg style="left:2238.8px;top:711.8px" width="23.2" height="23.2" viewBox="0 0 50 50"><path d="M10 4H40V12L30 25L40 38V46H10V38L20 25L10 12Z" fill="#dcdcdc" stroke="#1c1c1c" stroke-width="4" stroke-linejoin="round"/></svg><svg style="left:1066.8px;top:736.84px" width="23.2" height="23.2" viewBox="0 0 50 50"><path d="M10 4H40V12L30 25L40 38V46H10V38L20 25L10 12Z" fill="#dcdcdc" stroke="#1c1c1c" stroke-width="4" stroke-linejoin="round"/></svg><svg style="left:1497.6px;top:738.84px" width="19.2" height="19.2" viewBox="0 0 42 42"><circle cx="21" cy="21" r="16" fill="#dcdcdc" stroke="#1c1c1c" stroke-width="5"/></svg><svg style="left:1810px;top:736.84px" width="23.2" height="23.2" viewBox="0 0 50 50"><path d="M10 4H40V12L30 25L40 38V46H10V38L20 25L10 12Z" fill="#dcdcdc" stroke="#1c1c1c" stroke-width="4" stroke-linejoin="round"/></svg><svg style="left:2012.8px;top:738.84px" width="19.2" height="19.2" viewBox="0 0 42 42"><circle cx="21" cy="21" r="16" fill="#dcdcdc" stroke="#1c1c1c" stroke-width="5"/></svg><svg style="left:2238.8px;top:736.84px" width="23.2" height="23.2" viewBox="0 0 50 50"><path d="M10 4H40V12L30 25L40 38V46H10V38L20 25L10 12Z" fill="#dcdcdc" stroke="#1c1c1c" stroke-width="4" stroke-linejoin="round"/></svg><svg style="left:950.8px;top:761.88px" width="23.2" height="23.2" viewBox="0 0 50 50"><path d="M10 4H40V12L30 25L40 38V46H10V38L20 25L10 12Z" fill="#dcdcdc" stroke="#1c1c1c" stroke-width="4" stroke-linejoin="round"/></svg><svg style="left:1166px;top:761.88px" width="23.2" height="23.2" viewBox="0 0 50 50"><path d="M10 4H40V12L30 25L40 38V46H10V38L20 25L10 12Z" fill="#dcdcdc" stroke="#1c1c1c" stroke-width="4" stroke-linejoin="round"/></svg><svg style="left:1467.6px;top:811.92px" width="23.2" height="23.2" viewBox="0 0 50 50"><path d="M30 4L8 25L30 46L38 38L25 25L38 12Z" fill="#dcdcdc" stroke="#1c1c1c" stroke-width="4" stroke-linejoin="round"/></svg><svg style="left:1682.4px;top:811.92px" width="23.2" height="23.2" viewBox="0 0 50 50"><path d="M20 4L42 25L20 46L12 38L25 25L12 12Z" fill="#dcdcdc" stroke="#1c1c1c" stroke-width="4" stroke-linejoin="round"/></svg><svg style="left:2010.8px;top:811.92px" width="23.2" height="23.2" viewBox="0 0 50 50"><path d="M30 4L8 25L30 46L38 38L25 25L38 12Z" fill="#dcdcdc" stroke="#1c1c1c" stroke-width="4" stroke-linejoin="round"/></svg><svg style="left:2238.8px;top:811.92px" width="23.2" height="23.2" viewBox="0 0 50 50"><path d="M20 4L42 25L20 46L12 38L25 25L12 12Z" fill="#dcdcdc" stroke="#1c1c1c" stroke-width="4" stroke-linejoin="round"/></svg><svg style="left:950.8px;top:862px" width="23.2" height="23.2" viewBox="0 0 50 50"><path d="M30 4L8 25L30 46L38 38L25 25L38 12Z" fill="#dcdcdc" stroke="#1c1c1c" stroke-width="4" stroke-linejoin="round"/></svg><svg style="left:1166px;top:862px" width="23.2" height="23.2" viewBox="0 0 50 50"><path d="M10 4H40V12L30 25L40 38V46H10V38L20 25L10 12Z" fill="#dcdcdc" stroke="#1c1c1c" stroke-width="4" stroke-linejoin="round"/></svg><svg style="left:1467.6px;top:862px" width="23.2" height="23.2" viewBox="0 0 50 50"><path d="M30 4L8 25L30 46L38 38L25 25L38 12Z" fill="#dcdcdc" stroke="#1c1c1c" stroke-width="4" stroke-linejoin="round"/></svg><svg style="left:1682.4px;top:862px" width="23.2" height="23.2" viewBox="0 0 50 50"><path d="M20 4L42 25L20 46L12 38L25 25L12 12Z" fill="#dcdcdc" stroke="#1c1c1c" stroke-width="4" stroke-linejoin="round"/></svg><svg style="left:809.2px;top:937.08px" width="23.2" height="23.2" viewBox="0 0 50 50"><path d="M30 4L8 25L30 46L38 38L25 25L38 12Z" fill="#dcdcdc" stroke="#1c1c1c" stroke-width="4" stroke-linejoin="round"/></svg><svg style="left:1093.2px;top:937.08px" width="23.2" height="23.2" viewBox="0 0 50 50"><path d="M20 4L42 25L20 46L12 38L25 25L12 12Z" fill="#dcdcdc" stroke="#1c1c1c" stroke-width="4" stroke-linejoin="round"/></svg><svg style="left:837.2px;top:987.12px" width="23.2" height="23.2" viewBox="0 0 50 50"><path d="M30 4L8 25L30 46L38 38L25 25L38 12Z" fill="#dcdcdc" stroke="#1c1c1c" stroke-width="4" stroke-linejoin="round"/></svg><svg style="left:998px;top:987.12px" width="23.2" height="23.2" viewBox="0 0 50 50"><path d="M20 4L42 25L20 46L12 38L25 25L12 12Z" fill="#dcdcdc" stroke="#1c1c1c" stroke-width="4" stroke-linejoin="round"/></svg><svg style="left:809.2px;top:1087.24px" width="23.2" height="23.2" viewBox="0 0 50 50"><path d="M30 4L8 25L30 46L38 38L25 25L38 12Z" fill="#dcdcdc" stroke="#1c1c1c" stroke-width="4" stroke-linejoin="round"/></svg><svg style="left:1274.4px;top:1087.24px" width="23.2" height="23.2" viewBox="0 0 50 50"><path d="M20 4L42 25L20 46L12 38L25 25L12 12Z" fill="#dcdcdc" stroke="#1c1c1c" stroke-width="4" stroke-linejoin="round"/></svg><svg style="left:809.2px;top:1162.32px" width="23.2" height="23.2" viewBox="0 0 50 50"><path d="M30 4L8 25L30 46L38 38L25 25L38 12Z" fill="#dcdcdc" stroke="#1c1c1c" stroke-width="4" stroke-linejoin="round"/></svg><svg style="left:1274.4px;top:1162.32px" width="23.2" height="23.2" viewBox="0 0 50 50"><path d="M20 4L42 25L20 46L12 38L25 25L12 12Z" fill="#dcdcdc" stroke="#1c1c1c" stroke-width="4" stroke-linejoin="round"/></svg><svg style="left:809.2px;top:1187.36px" width="23.2" height="23.2" viewBox="0 0 50 50"><path d="M10 4H40V12L30 25L40 38V46H10V38L20 25L10 12Z" fill="#dcdcdc" stroke="#1c1c1c" stroke-width="4" stroke-linejoin="round"/></svg><svg style="left:1284.4px;top:1187.36px" width="23.2" height="23.2" viewBox="0 0 50 50"><path d="M10 4H40V12L30 25L40 38V46H10V38L20 25L10 12Z" fill="#dcdcdc" stroke="#1c1c1c" stroke-width="4" stroke-linejoin="round"/></svg><div style="left:2547.2px;top:85.2px;width:52.8px;height:1578.8px;background:rgba(0,0,0,.16)"></div><div style="left:820.4px;top:336.68px;width:1781.6px;height:22.8px;box-shadow:0 0 0 2.8px #161b42;background:linear-gradient(90deg,#fcd822 0,#fcd822 535.2px,#f0d838 553.2px,#9ccc90 577.2px,#4cc4e4 601.2px,#42c4f0 619.6px,#42c4f0 829.6px,#58c0dc 849.6px,#c0a880 871.6px,#f09430 893.6px,#fa9224 905.2px,#fa9224 100%)"></div><div style="left:820.4px;top:386.72px;width:1781.6px;height:22.8px;box-shadow:0 0 0 2.8px #161b42;background:linear-gradient(90deg,#fcd822 0,#fcd822 535.2px,#f0d838 553.2px,#9ccc90 577.2px,#4cc4e4 601.2px,#42c4f0 619.6px,#42c4f0 829.6px,#58c0dc 849.6px,#c0a880 871.6px,#f09430 893.6px,#fa9224 905.2px,#fa9224 100%)"></div><div style="left:820.4px;top:436.8px;width:1781.6px;height:22.8px;box-shadow:0 0 0 2.8px #161b42;background:linear-gradient(90deg,#fcd822 0,#fcd822 535.2px,#f0d838 553.2px,#9ccc90 577.2px,#4cc4e4 601.2px,#42c4f0 619.6px,#42c4f0 829.6px,#58c0dc 849.6px,#c0a880 871.6px,#f09430 893.6px,#fa9224 905.2px,#fa9224 100%)"></div><div style="left:812px;top:0;width:1788px;height:8px;background:#1c1c1c"></div><div style="left:810px;top:11.6px;width:388px;height:14px;background:#707070;border-radius:6.8px"></div><div style="left:807.2px;top:11.6px;width:11.2px;height:14px;background:#3a96f0;border-radius:6px"></div><div style="left:1190.4px;top:11.6px;width:11.2px;height:14px;background:#3a96f0;border-radius:6px"></div><div style="left:967.2px;top:14.4px;width:8px;height:8px;background:#5aa0e0;border-radius:4px"></div><div style="left:817.2px;top:46.4px;width:2.8px;height:7.2px;background:#8a8a8a"></div><div class="t" style="left:812.8px;top:25.2px;font-size:18px;color:#969696">:00f</div><div style="left:913.2px;top:46.4px;width:2.8px;height:7.2px;background:#8a8a8a"></div><div class="t" style="left:881.6px;top:25.2px;width:64px;text-align:center;font-size:18px;color:#969696">10f</div><div style="left:1009.2px;top:46.4px;width:2.8px;height:7.2px;background:#8a8a8a"></div><div class="t" style="left:977.6px;top:25.2px;width:64px;text-align:center;font-size:18px;color:#969696">20f</div><div style="left:1105.2px;top:46.4px;width:2.8px;height:7.2px;background:#8a8a8a"></div><div class="t" style="left:1073.6px;top:25.2px;width:64px;text-align:center;font-size:18px;color:#969696">01:00f</div><div style="left:1201.2px;top:46.4px;width:2.8px;height:7.2px;background:#8a8a8a"></div><div class="t" style="left:1169.6px;top:25.2px;width:64px;text-align:center;font-size:18px;color:#969696">10f</div><div style="left:1297.2px;top:46.4px;width:2.8px;height:7.2px;background:#8a8a8a"></div><div class="t" style="left:1265.6px;top:25.2px;width:64px;text-align:center;font-size:18px;color:#969696">20f</div><div style="left:1393.2px;top:46.4px;width:2.8px;height:7.2px;background:#8a8a8a"></div><div class="t" style="left:1361.6px;top:25.2px;width:64px;text-align:center;font-size:18px;color:#969696">02:00f</div><div style="left:1489.2px;top:46.4px;width:2.8px;height:7.2px;background:#8a8a8a"></div><div class="t" style="left:1457.6px;top:25.2px;width:64px;text-align:center;font-size:18px;color:#969696">10f</div><div style="left:1585.2px;top:46.4px;width:2.8px;height:7.2px;background:#8a8a8a"></div><div class="t" style="left:1553.6px;top:25.2px;width:64px;text-align:center;font-size:18px;color:#969696">20f</div><div style="left:1681.2px;top:46.4px;width:2.8px;height:7.2px;background:#8a8a8a"></div><div class="t" style="left:1649.6px;top:25.2px;width:64px;text-align:center;font-size:18px;color:#969696">03:00f</div><div style="left:1777.2px;top:46.4px;width:2.8px;height:7.2px;background:#8a8a8a"></div><div class="t" style="left:1745.6px;top:25.2px;width:64px;text-align:center;font-size:18px;color:#969696">10f</div><div style="left:1873.2px;top:46.4px;width:2.8px;height:7.2px;background:#8a8a8a"></div><div class="t" style="left:1841.6px;top:25.2px;width:64px;text-align:center;font-size:18px;color:#969696">20f</div><div style="left:1969.2px;top:46.4px;width:2.8px;height:7.2px;background:#8a8a8a"></div><div class="t" style="left:1937.6px;top:25.2px;width:64px;text-align:center;font-size:18px;color:#969696">04:00f</div><div style="left:2065.2px;top:46.4px;width:2.8px;height:7.2px;background:#8a8a8a"></div><div class="t" style="left:2033.6px;top:25.2px;width:64px;text-align:center;font-size:18px;color:#969696">10f</div><div style="left:2161.2px;top:46.4px;width:2.8px;height:7.2px;background:#8a8a8a"></div><div class="t" style="left:2129.6px;top:25.2px;width:64px;text-align:center;font-size:18px;color:#969696">20f</div><div style="left:2257.2px;top:46.4px;width:2.8px;height:7.2px;background:#8a8a8a"></div><div class="t" style="left:2225.6px;top:25.2px;width:64px;text-align:center;font-size:18px;color:#969696">05:00f</div><div style="left:2353.2px;top:46.4px;width:2.8px;height:7.2px;background:#8a8a8a"></div><div class="t" style="left:2321.6px;top:25.2px;width:64px;text-align:center;font-size:18px;color:#969696">10f</div><div style="left:2449.2px;top:46.4px;width:2.8px;height:7.2px;background:#8a8a8a"></div><div class="t" style="left:2417.6px;top:25.2px;width:64px;text-align:center;font-size:18px;color:#969696">20f</div><div style="left:2545.2px;top:46.4px;width:2.8px;height:7.2px;background:#8a8a8a"></div><div class="t" style="left:2513.6px;top:25.2px;width:64px;text-align:center;font-size:18px;color:#969696">06:00f</div><div style="left:818.4px;top:55.6px;width:1728px;height:21.2px;background:#7c7c7c"></div><div style="left:812px;top:55.6px;width:7.2px;height:22px;background:#3a96f0;border-radius:3.2px"></div><div style="left:2546.4px;top:55.6px;width:10.4px;height:22px;background:#3a96f0;border-radius:3.2px"></div><div style="left:818.4px;top:78.4px;width:1781.6px;height:6.8px;background:#06a40a"></div><div style="left:825.6px;top:78.4px;width:128px;height:6.8px;background:#0a0a9c"></div><div style="left:960px;top:78.4px;width:72.8px;height:6.8px;background:#0a0a9c"></div><div style="left:1039.2px;top:78.4px;width:8.8px;height:6.8px;background:#0a0a9c"></div><div style="left:1544.8px;top:36px;width:3.2px;height:1628px;background:#3a8ee6"></div><svg style="left:1536.8px;top:30.4px" width="19.2" height="20" viewBox="0 0 48 50"><path d="M4 4H44V28L24 48L4 28Z" fill="#3a96f0"/></svg><svg style="left:1539.6px;top:514px" width="13.6" height="21.6" viewBox="0 0 34 54"><path d="M6 6H28M17 6V48M6 48H28" stroke="#161616" stroke-width="13" fill="none"/><path d="M8 6H26M17 6V48M8 48H26" stroke="#e4e4e4" stroke-width="6" fill="none"/></svg><div style="left:1368px;top:933.2px;width:944px;height:706.8px;background:#202020"></div><div style="left:1384px;top:947.6px;width:904px;height:672.4px;background:#101010"></div><svg style="left:1390.4px;top:952px" width="891.2" height="661.6" viewBox="0 0 222.800 165.400"><defs><pattern id="ck" width="3.100" height="3.100" patternUnits="userSpaceOnUse"><rect width="3.100" height="3.100" fill="#fdfdfd"/><rect width="1.550" height="1.550" fill="#d4d4d4"/><rect x="1.550" y="1.550" width="1.550" height="1.550" fill="#d4d4d4"/></pattern></defs><rect width="222.800" height="165.400" fill="url(#ck)"/></svg><div style="left:1476px;top:1451.2px;width:520px;height:47.2px;background:#d5d5d5;border-radius:0 0 20px 20px"></div><div style="left:1506.4px;top:1038.4px;width:596px;height:413.6px;background:#dcdcdc;border-radius:8px 8px 0 0"></div><div style="left:1517.6px;top:1048px;width:574.4px;height:404px;background:#fff"></div><div style="left:1540px;top:1062.4px;width:76px;height:19.2px;background:#d2d2d2;border-radius:9.6px"></div><div style="left:1517.6px;top:1093.2px;width:574.4px;height:2.8px;background:#e6e6e6"></div><div style="left:1636.8px;top:1116px;width:300.8px;height:16.8px;background:#e2e2e2;border-radius:8px"></div><div style="left:1636.8px;top:1147.2px;width:300.8px;height:9.6px;background:#e2e2e2;border-radius:4.8px"></div><div style="left:1633.6px;top:1168px;width:304px;height:185.6px;background:#1f4e5c;border-radius:10px"></div><div style="left:1636.8px;top:1368px;width:300.8px;height:10.4px;background:#e2e2e2;border-radius:5.2px"></div><div style="left:1636.8px;top:1392px;width:300.8px;height:10.4px;background:#e2e2e2;border-radius:5.2px"></div><div style="left:1636.8px;top:1416px;width:300.8px;height:10.4px;background:#e2e2e2;border-radius:5.2px"></div><div class="t" style="left:1751.2px;top:1189.6px;font-size:34.4px;line-height:40px;height:40px;font-weight:bold;color:#fff;letter-spacing:-1.4px">360°</div><svg style="left:1700px;top:1220px" width="168" height="128" viewBox="0 0 42 32"><path d="M14.200 4Q23.500 2.300 32 4" stroke="#f0d41c" stroke-width="1.400" fill="none" stroke-linecap="round"/><path d="M31.200 2.500L34.300 4.700L30.700 5.700Z" fill="#f0d41c"/><g stroke="#fff" stroke-width="1.250" fill="none" stroke-linejoin="round" stroke-linecap="round"><ellipse cx="20.100" cy="11.200" rx="15.400" ry="4.200"/><path d="M4.700 11.200V24.500M35.500 11.200V24.500M14.700 15.100V28.400M25.900 15.100V28.400"/><path d="M4.700 24.500A15.400 4.200 0 0 0 14.700 28.430M25.900 28.430A15.400 4.200 0 0 0 35.500 24.500M4.700 24.500A15.400 4.200 0 0 1 35.500 24.500"/><path d="M20 7.200V20.200" stroke-width=".7"/></g><circle cx="19.800" cy="14" r="2.300" fill="#4ec8f2"/></svg><div style="left:1983.2px;top:1110.4px;width:215.2px;height:437.6px;background:#d7d7d7;border-radius:30px"></div><div style="left:1992.4px;top:1120px;width:196px;height:417.2px;background:#fff;border-radius:22px"></div><div style="left:2040.8px;top:1110.4px;width:108px;height:29.6px;background:#d7d7d7;border-radius:0 0 10px 10px"></div><div style="left:2069.2px;top:1128px;width:50.8px;height:3.6px;background:#a4a4a4;border-radius:1.6px"></div><div style="left:2056.4px;top:1128px;width:3.6px;height:3.6px;background:#a4a4a4;border-radius:1.6px"></div><div style="left:2006.4px;top:1152px;width:75.2px;height:20px;background:#d4d4d4;border-radius:10px"></div><div style="left:1992.4px;top:1181.2px;width:196px;height:2.8px;background:#e6e6e6"></div><div style="left:2004px;top:1200px;width:176px;height:28px;background:#d9d9d9;border-radius:6px"></div><div style="left:2004px;top:1242.4px;width:176px;height:10.4px;background:#e2e2e2;border-radius:5.2px"></div><div style="left:2004px;top:1265.6px;width:176px;height:10.4px;background:#e2e2e2;border-radius:5.2px"></div><div style="left:2004px;top:1418.4px;width:176px;height:10.4px;background:#e2e2e2;border-radius:5.2px"></div><div style="left:2004px;top:1442.8px;width:176px;height:10.4px;background:#e2e2e2;border-radius:5.2px"></div><div style="left:2004px;top:1467.2px;width:176px;height:10.4px;background:#e2e2e2;border-radius:5.2px"></div><div style="left:2004px;top:1491.6px;width:176px;height:10.4px;background:#e2e2e2;border-radius:5.2px"></div><div style="left:2004px;top:1516px;width:176px;height:10.4px;background:#e2e2e2;border-radius:5.2px"></div><div style="left:2004px;top:1292px;width:176px;height:113.6px;background:#1f4e5c;border-radius:6px"></div><svg style="left:2004px;top:1292px" width="176" height="113.6" viewBox="0 0 44 28.400"><rect x="7.200" y="5.800" width="30" height="11.800" rx="5.800" fill="#3ec2e6"/><path d="M14.800 7.400Q17 6.800 18.600 7.400V16Q17 16.600 14.800 16Q13.800 11.700 14.800 7.400Z" fill="#1c3a44"/><path d="M30 7.600Q32.200 8 33 8.600Q33.800 11.700 33 14.800Q32.200 15.400 30 15.800Z" fill="#1c3a44"/><rect x="19.600" y="7" width="9.600" height="9.400" rx="1" fill="#5cd0ee"/><circle cx="13" cy="6.600" r="4.300" fill="none" stroke="#a8b8bc" stroke-width=".6"/><path d="M23 3.400H41M14 21.500H32" stroke="#fff" stroke-width=".8"/><circle cx="35.300" cy="25.500" r="1.200" fill="#f6d820"/><circle cx="38.400" cy="25.500" r="1.200" fill="#a8dcf4"/><circle cx="41.500" cy="25.500" r="1.200" fill="#f49020"/></svg></div>
</body></html>
